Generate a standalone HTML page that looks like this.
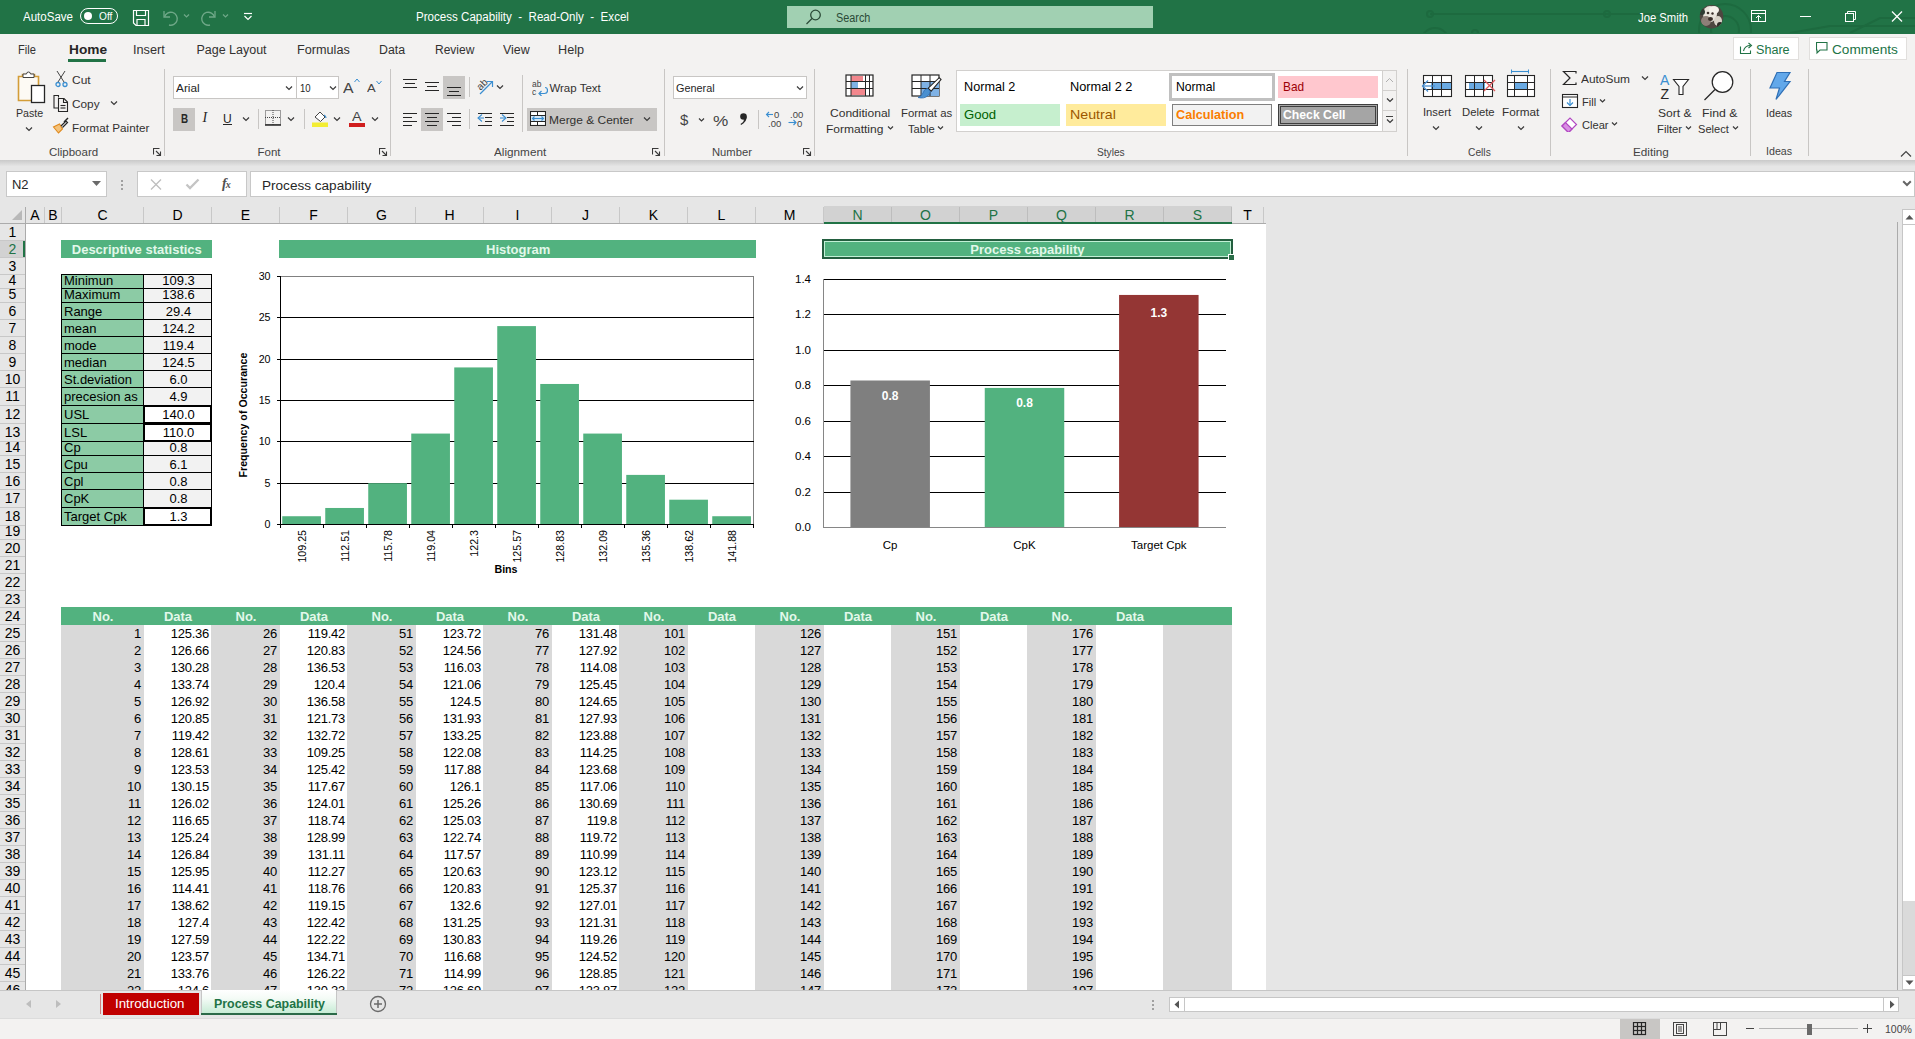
<!DOCTYPE html><html><head><meta charset="utf-8"><style>
*{margin:0;padding:0}
html,body{width:1915px;height:1039px;overflow:hidden;background:#fff}
body{position:relative;font-family:"Liberation Sans",sans-serif}
body>div,body>svg{position:absolute}
.t{position:absolute;white-space:nowrap;line-height:1}
</style></head><body>
<div style="left:0px;top:0px;width:1915px;height:34px;background:#217346"></div>
<div style="left:0px;top:34px;width:1915px;height:126px;background:#f3f2f1"></div>
<div style="left:0px;top:160px;width:1915px;height:6px;background:linear-gradient(#c9c9c9,#e4e4e4)"></div>
<div style="left:0px;top:166px;width:1915px;height:39px;background:#e6e6e6"></div>
<div style="left:0px;top:205px;width:1266px;height:18px;background:#e6e6e6"></div>
<div style="left:1266px;top:205px;width:649px;height:785px;background:#e6e6e6"></div>
<div style="left:26px;top:224px;width:1240px;height:766px;background:#fff"></div>
<div style="left:0px;top:224px;width:25px;height:766px;background:#e6e6e6"></div>
<div style="left:44px;top:207px;width:1px;height:16px;background:#c8c8c8"></div>
<div class="t" style="top:208.15px;font-size:14px;color:#000;left:35.0px;transform:translateX(-50%) ;">A</div>
<div style="left:61px;top:207px;width:1px;height:16px;background:#c8c8c8"></div>
<div class="t" style="top:208.15px;font-size:14px;color:#000;left:53.0px;transform:translateX(-50%) ;">B</div>
<div style="left:143px;top:207px;width:1px;height:16px;background:#c8c8c8"></div>
<div class="t" style="top:208.15px;font-size:14px;color:#000;left:102.5px;transform:translateX(-50%) ;">C</div>
<div style="left:211px;top:207px;width:1px;height:16px;background:#c8c8c8"></div>
<div class="t" style="top:208.15px;font-size:14px;color:#000;left:177.5px;transform:translateX(-50%) ;">D</div>
<div style="left:279px;top:207px;width:1px;height:16px;background:#c8c8c8"></div>
<div class="t" style="top:208.15px;font-size:14px;color:#000;left:245.5px;transform:translateX(-50%) ;">E</div>
<div style="left:347px;top:207px;width:1px;height:16px;background:#c8c8c8"></div>
<div class="t" style="top:208.15px;font-size:14px;color:#000;left:313.5px;transform:translateX(-50%) ;">F</div>
<div style="left:415px;top:207px;width:1px;height:16px;background:#c8c8c8"></div>
<div class="t" style="top:208.15px;font-size:14px;color:#000;left:381.5px;transform:translateX(-50%) ;">G</div>
<div style="left:483px;top:207px;width:1px;height:16px;background:#c8c8c8"></div>
<div class="t" style="top:208.15px;font-size:14px;color:#000;left:449.5px;transform:translateX(-50%) ;">H</div>
<div style="left:551px;top:207px;width:1px;height:16px;background:#c8c8c8"></div>
<div class="t" style="top:208.15px;font-size:14px;color:#000;left:517.5px;transform:translateX(-50%) ;">I</div>
<div style="left:619px;top:207px;width:1px;height:16px;background:#c8c8c8"></div>
<div class="t" style="top:208.15px;font-size:14px;color:#000;left:585.5px;transform:translateX(-50%) ;">J</div>
<div style="left:687px;top:207px;width:1px;height:16px;background:#c8c8c8"></div>
<div class="t" style="top:208.15px;font-size:14px;color:#000;left:653.5px;transform:translateX(-50%) ;">K</div>
<div style="left:755px;top:207px;width:1px;height:16px;background:#c8c8c8"></div>
<div class="t" style="top:208.15px;font-size:14px;color:#000;left:721.5px;transform:translateX(-50%) ;">L</div>
<div style="left:823px;top:207px;width:1px;height:16px;background:#c8c8c8"></div>
<div class="t" style="top:208.15px;font-size:14px;color:#000;left:789.5px;transform:translateX(-50%) ;">M</div>
<div style="left:824px;top:206px;width:68px;height:17px;background:#d2d2d2"></div>
<div style="left:891px;top:207px;width:1px;height:16px;background:#bdbdbd"></div>
<div class="t" style="top:208.15px;font-size:14px;color:#217346;left:857.5px;transform:translateX(-50%) ;">N</div>
<div style="left:892px;top:206px;width:68px;height:17px;background:#d2d2d2"></div>
<div style="left:959px;top:207px;width:1px;height:16px;background:#bdbdbd"></div>
<div class="t" style="top:208.15px;font-size:14px;color:#217346;left:925.5px;transform:translateX(-50%) ;">O</div>
<div style="left:960px;top:206px;width:68px;height:17px;background:#d2d2d2"></div>
<div style="left:1027px;top:207px;width:1px;height:16px;background:#bdbdbd"></div>
<div class="t" style="top:208.15px;font-size:14px;color:#217346;left:993.5px;transform:translateX(-50%) ;">P</div>
<div style="left:1028px;top:206px;width:68px;height:17px;background:#d2d2d2"></div>
<div style="left:1095px;top:207px;width:1px;height:16px;background:#bdbdbd"></div>
<div class="t" style="top:208.15px;font-size:14px;color:#217346;left:1061.5px;transform:translateX(-50%) ;">Q</div>
<div style="left:1096px;top:206px;width:68px;height:17px;background:#d2d2d2"></div>
<div style="left:1163px;top:207px;width:1px;height:16px;background:#bdbdbd"></div>
<div class="t" style="top:208.15px;font-size:14px;color:#217346;left:1129.5px;transform:translateX(-50%) ;">R</div>
<div style="left:1164px;top:206px;width:68px;height:17px;background:#d2d2d2"></div>
<div style="left:1231px;top:207px;width:1px;height:16px;background:#bdbdbd"></div>
<div class="t" style="top:208.15px;font-size:14px;color:#217346;left:1197.5px;transform:translateX(-50%) ;">S</div>
<div style="left:1263px;top:207px;width:1px;height:16px;background:#c8c8c8"></div>
<div class="t" style="top:208.15px;font-size:14px;color:#000;left:1247.5px;transform:translateX(-50%) ;">T</div>
<div style="left:0px;top:223px;width:1266px;height:1px;background:#ababab"></div>
<div style="left:824px;top:222px;width:408px;height:2px;background:#217346"></div>
<svg style="left:10px;top:209px" width="14" height="12"><polygon points="12,1 12,11 2,11" fill="#b8b8b8"/></svg>
<div style="left:25px;top:207px;width:1px;height:783px;background:#ababab"></div>
<div style="left:0px;top:240px;width:25px;height:1px;background:#c8c8c8"></div>
<div class="t" style="top:225.15px;font-size:14px;color:#000;left:12.5px;transform:translateX(-50%) ;">1</div>
<div style="left:0px;top:241px;width:25px;height:17px;background:#d2d2d2"></div>
<div style="left:23px;top:241px;width:2px;height:17px;background:#217346"></div>
<div style="left:0px;top:257px;width:25px;height:1px;background:#c8c8c8"></div>
<div class="t" style="top:242.15px;font-size:14px;color:#217346;left:12.5px;transform:translateX(-50%) ;">2</div>
<div style="left:0px;top:274px;width:25px;height:1px;background:#c8c8c8"></div>
<div class="t" style="top:259.15px;font-size:14px;color:#000;left:12.5px;transform:translateX(-50%) ;">3</div>
<div style="left:0px;top:288px;width:25px;height:1px;background:#c8c8c8"></div>
<div class="t" style="top:273.15px;font-size:14px;color:#000;left:12.5px;transform:translateX(-50%) ;">4</div>
<div style="left:0px;top:302px;width:25px;height:1px;background:#c8c8c8"></div>
<div class="t" style="top:287.15px;font-size:14px;color:#000;left:12.5px;transform:translateX(-50%) ;">5</div>
<div style="left:0px;top:319px;width:25px;height:1px;background:#c8c8c8"></div>
<div class="t" style="top:304.15px;font-size:14px;color:#000;left:12.5px;transform:translateX(-50%) ;">6</div>
<div style="left:0px;top:336px;width:25px;height:1px;background:#c8c8c8"></div>
<div class="t" style="top:321.15px;font-size:14px;color:#000;left:12.5px;transform:translateX(-50%) ;">7</div>
<div style="left:0px;top:353px;width:25px;height:1px;background:#c8c8c8"></div>
<div class="t" style="top:338.15px;font-size:14px;color:#000;left:12.5px;transform:translateX(-50%) ;">8</div>
<div style="left:0px;top:370px;width:25px;height:1px;background:#c8c8c8"></div>
<div class="t" style="top:355.15px;font-size:14px;color:#000;left:12.5px;transform:translateX(-50%) ;">9</div>
<div style="left:0px;top:387px;width:25px;height:1px;background:#c8c8c8"></div>
<div class="t" style="top:372.15px;font-size:14px;color:#000;left:12.5px;transform:translateX(-50%) ;">10</div>
<div style="left:0px;top:405px;width:25px;height:1px;background:#c8c8c8"></div>
<div class="t" style="top:389.15px;font-size:14px;color:#000;left:12.5px;transform:translateX(-50%) ;">11</div>
<div style="left:0px;top:423px;width:25px;height:1px;background:#c8c8c8"></div>
<div class="t" style="top:407.15px;font-size:14px;color:#000;left:12.5px;transform:translateX(-50%) ;">12</div>
<div style="left:0px;top:441px;width:25px;height:1px;background:#c8c8c8"></div>
<div class="t" style="top:425.15px;font-size:14px;color:#000;left:12.5px;transform:translateX(-50%) ;">13</div>
<div style="left:0px;top:455px;width:25px;height:1px;background:#c8c8c8"></div>
<div class="t" style="top:440.15px;font-size:14px;color:#000;left:12.5px;transform:translateX(-50%) ;">14</div>
<div style="left:0px;top:472px;width:25px;height:1px;background:#c8c8c8"></div>
<div class="t" style="top:457.15px;font-size:14px;color:#000;left:12.5px;transform:translateX(-50%) ;">15</div>
<div style="left:0px;top:489px;width:25px;height:1px;background:#c8c8c8"></div>
<div class="t" style="top:474.15px;font-size:14px;color:#000;left:12.5px;transform:translateX(-50%) ;">16</div>
<div style="left:0px;top:507px;width:25px;height:1px;background:#c8c8c8"></div>
<div class="t" style="top:491.15px;font-size:14px;color:#000;left:12.5px;transform:translateX(-50%) ;">17</div>
<div style="left:0px;top:525px;width:25px;height:1px;background:#c8c8c8"></div>
<div class="t" style="top:509.15px;font-size:14px;color:#000;left:12.5px;transform:translateX(-50%) ;">18</div>
<div style="left:0px;top:539px;width:25px;height:1px;background:#c8c8c8"></div>
<div class="t" style="top:524.15px;font-size:14px;color:#000;left:12.5px;transform:translateX(-50%) ;">19</div>
<div style="left:0px;top:556px;width:25px;height:1px;background:#c8c8c8"></div>
<div class="t" style="top:541.15px;font-size:14px;color:#000;left:12.5px;transform:translateX(-50%) ;">20</div>
<div style="left:0px;top:573px;width:25px;height:1px;background:#c8c8c8"></div>
<div class="t" style="top:558.15px;font-size:14px;color:#000;left:12.5px;transform:translateX(-50%) ;">21</div>
<div style="left:0px;top:590px;width:25px;height:1px;background:#c8c8c8"></div>
<div class="t" style="top:575.15px;font-size:14px;color:#000;left:12.5px;transform:translateX(-50%) ;">22</div>
<div style="left:0px;top:607px;width:25px;height:1px;background:#c8c8c8"></div>
<div class="t" style="top:592.15px;font-size:14px;color:#000;left:12.5px;transform:translateX(-50%) ;">23</div>
<div style="left:0px;top:624px;width:25px;height:1px;background:#c8c8c8"></div>
<div class="t" style="top:609.15px;font-size:14px;color:#000;left:12.5px;transform:translateX(-50%) ;">24</div>
<div style="left:0px;top:641px;width:25px;height:1px;background:#c8c8c8"></div>
<div class="t" style="top:626.15px;font-size:14px;color:#000;left:12.5px;transform:translateX(-50%) ;">25</div>
<div style="left:0px;top:658px;width:25px;height:1px;background:#c8c8c8"></div>
<div class="t" style="top:643.15px;font-size:14px;color:#000;left:12.5px;transform:translateX(-50%) ;">26</div>
<div style="left:0px;top:675px;width:25px;height:1px;background:#c8c8c8"></div>
<div class="t" style="top:660.15px;font-size:14px;color:#000;left:12.5px;transform:translateX(-50%) ;">27</div>
<div style="left:0px;top:692px;width:25px;height:1px;background:#c8c8c8"></div>
<div class="t" style="top:677.15px;font-size:14px;color:#000;left:12.5px;transform:translateX(-50%) ;">28</div>
<div style="left:0px;top:709px;width:25px;height:1px;background:#c8c8c8"></div>
<div class="t" style="top:694.15px;font-size:14px;color:#000;left:12.5px;transform:translateX(-50%) ;">29</div>
<div style="left:0px;top:726px;width:25px;height:1px;background:#c8c8c8"></div>
<div class="t" style="top:711.15px;font-size:14px;color:#000;left:12.5px;transform:translateX(-50%) ;">30</div>
<div style="left:0px;top:743px;width:25px;height:1px;background:#c8c8c8"></div>
<div class="t" style="top:728.15px;font-size:14px;color:#000;left:12.5px;transform:translateX(-50%) ;">31</div>
<div style="left:0px;top:760px;width:25px;height:1px;background:#c8c8c8"></div>
<div class="t" style="top:745.15px;font-size:14px;color:#000;left:12.5px;transform:translateX(-50%) ;">32</div>
<div style="left:0px;top:777px;width:25px;height:1px;background:#c8c8c8"></div>
<div class="t" style="top:762.15px;font-size:14px;color:#000;left:12.5px;transform:translateX(-50%) ;">33</div>
<div style="left:0px;top:794px;width:25px;height:1px;background:#c8c8c8"></div>
<div class="t" style="top:779.15px;font-size:14px;color:#000;left:12.5px;transform:translateX(-50%) ;">34</div>
<div style="left:0px;top:811px;width:25px;height:1px;background:#c8c8c8"></div>
<div class="t" style="top:796.15px;font-size:14px;color:#000;left:12.5px;transform:translateX(-50%) ;">35</div>
<div style="left:0px;top:828px;width:25px;height:1px;background:#c8c8c8"></div>
<div class="t" style="top:813.15px;font-size:14px;color:#000;left:12.5px;transform:translateX(-50%) ;">36</div>
<div style="left:0px;top:845px;width:25px;height:1px;background:#c8c8c8"></div>
<div class="t" style="top:830.15px;font-size:14px;color:#000;left:12.5px;transform:translateX(-50%) ;">37</div>
<div style="left:0px;top:862px;width:25px;height:1px;background:#c8c8c8"></div>
<div class="t" style="top:847.15px;font-size:14px;color:#000;left:12.5px;transform:translateX(-50%) ;">38</div>
<div style="left:0px;top:879px;width:25px;height:1px;background:#c8c8c8"></div>
<div class="t" style="top:864.15px;font-size:14px;color:#000;left:12.5px;transform:translateX(-50%) ;">39</div>
<div style="left:0px;top:896px;width:25px;height:1px;background:#c8c8c8"></div>
<div class="t" style="top:881.15px;font-size:14px;color:#000;left:12.5px;transform:translateX(-50%) ;">40</div>
<div style="left:0px;top:913px;width:25px;height:1px;background:#c8c8c8"></div>
<div class="t" style="top:898.15px;font-size:14px;color:#000;left:12.5px;transform:translateX(-50%) ;">41</div>
<div style="left:0px;top:930px;width:25px;height:1px;background:#c8c8c8"></div>
<div class="t" style="top:915.15px;font-size:14px;color:#000;left:12.5px;transform:translateX(-50%) ;">42</div>
<div style="left:0px;top:947px;width:25px;height:1px;background:#c8c8c8"></div>
<div class="t" style="top:932.15px;font-size:14px;color:#000;left:12.5px;transform:translateX(-50%) ;">43</div>
<div style="left:0px;top:964px;width:25px;height:1px;background:#c8c8c8"></div>
<div class="t" style="top:949.15px;font-size:14px;color:#000;left:12.5px;transform:translateX(-50%) ;">44</div>
<div style="left:0px;top:981px;width:25px;height:1px;background:#c8c8c8"></div>
<div class="t" style="top:966.15px;font-size:14px;color:#000;left:12.5px;transform:translateX(-50%) ;">45</div>
<div style="left:0px;top:998px;width:25px;height:1px;background:#c8c8c8"></div>
<div class="t" style="top:983.15px;font-size:14px;color:#000;left:12.5px;transform:translateX(-50%) ;">46</div>
<div style="left:61px;top:240px;width:151px;height:18px;background:#52b27f"></div>
<div class="t" style="top:242.70px;font-size:13px;color:#e2f8ea;font-weight:700;left:136.8px;transform:translateX(-50%) ;">Descriptive statistics</div>
<div style="left:279px;top:240px;width:477px;height:18px;background:#52b27f"></div>
<div class="t" style="top:242.70px;font-size:13px;color:#e2f8ea;font-weight:700;left:518.2px;transform:translateX(-50%) ;">Histogram</div>
<div style="left:823px;top:240px;width:409px;height:18px;background:#52b27f"></div>
<div class="t" style="top:242.70px;font-size:13px;color:#e2f8ea;font-weight:700;left:1027.4px;transform:translateX(-50%) ;">Process capability</div>
<div style="left:822px;top:239px;width:411px;height:20px;border:2px solid #235e3f;box-sizing:border-box"></div>
<div style="left:824px;top:241px;width:407px;height:16px;border:1px solid #c2f0d6;box-sizing:border-box"></div>
<div style="left:1228px;top:254px;width:5px;height:5px;background:#2a6e48;border:1px solid #fff"></div>
<div style="left:61px;top:274px;width:83px;height:15px;background:#8ccba5;border:1px solid #000;box-sizing:border-box"></div>
<div style="left:143px;top:274px;width:69px;height:15px;background:#f2f2f2;border:1px solid #000;box-sizing:border-box"></div>
<div class="t" style="top:274.00px;font-size:13px;color:#000;left:64px;">Minimun</div>
<div class="t" style="top:274.00px;font-size:13px;color:#000;left:178.5px;transform:translateX(-50%) ;">109.3</div>
<div style="left:61px;top:288px;width:83px;height:15px;background:#8ccba5;border:1px solid #000;box-sizing:border-box"></div>
<div style="left:143px;top:288px;width:69px;height:15px;background:#f2f2f2;border:1px solid #000;box-sizing:border-box"></div>
<div class="t" style="top:288.00px;font-size:13px;color:#000;left:64px;">Maximum</div>
<div class="t" style="top:288.00px;font-size:13px;color:#000;left:178.5px;transform:translateX(-50%) ;">138.6</div>
<div style="left:61px;top:302px;width:83px;height:18px;background:#8ccba5;border:1px solid #000;box-sizing:border-box"></div>
<div style="left:143px;top:302px;width:69px;height:18px;background:#f2f2f2;border:1px solid #000;box-sizing:border-box"></div>
<div class="t" style="top:305.00px;font-size:13px;color:#000;left:64px;">Range</div>
<div class="t" style="top:305.00px;font-size:13px;color:#000;left:178.5px;transform:translateX(-50%) ;">29.4</div>
<div style="left:61px;top:319px;width:83px;height:18px;background:#8ccba5;border:1px solid #000;box-sizing:border-box"></div>
<div style="left:143px;top:319px;width:69px;height:18px;background:#f2f2f2;border:1px solid #000;box-sizing:border-box"></div>
<div class="t" style="top:322.00px;font-size:13px;color:#000;left:64px;">mean</div>
<div class="t" style="top:322.00px;font-size:13px;color:#000;left:178.5px;transform:translateX(-50%) ;">124.2</div>
<div style="left:61px;top:336px;width:83px;height:18px;background:#8ccba5;border:1px solid #000;box-sizing:border-box"></div>
<div style="left:143px;top:336px;width:69px;height:18px;background:#f2f2f2;border:1px solid #000;box-sizing:border-box"></div>
<div class="t" style="top:339.00px;font-size:13px;color:#000;left:64px;">mode</div>
<div class="t" style="top:339.00px;font-size:13px;color:#000;left:178.5px;transform:translateX(-50%) ;">119.4</div>
<div style="left:61px;top:353px;width:83px;height:18px;background:#8ccba5;border:1px solid #000;box-sizing:border-box"></div>
<div style="left:143px;top:353px;width:69px;height:18px;background:#f2f2f2;border:1px solid #000;box-sizing:border-box"></div>
<div class="t" style="top:356.00px;font-size:13px;color:#000;left:64px;">median</div>
<div class="t" style="top:356.00px;font-size:13px;color:#000;left:178.5px;transform:translateX(-50%) ;">124.5</div>
<div style="left:61px;top:370px;width:83px;height:18px;background:#8ccba5;border:1px solid #000;box-sizing:border-box"></div>
<div style="left:143px;top:370px;width:69px;height:18px;background:#f2f2f2;border:1px solid #000;box-sizing:border-box"></div>
<div class="t" style="top:373.00px;font-size:13px;color:#000;left:64px;">St.deviation</div>
<div class="t" style="top:373.00px;font-size:13px;color:#000;left:178.5px;transform:translateX(-50%) ;">6.0</div>
<div style="left:61px;top:387px;width:83px;height:19px;background:#8ccba5;border:1px solid #000;box-sizing:border-box"></div>
<div style="left:143px;top:387px;width:69px;height:19px;background:#f2f2f2;border:1px solid #000;box-sizing:border-box"></div>
<div class="t" style="top:390.00px;font-size:13px;color:#000;left:64px;">precesion as</div>
<div class="t" style="top:390.00px;font-size:13px;color:#000;left:178.5px;transform:translateX(-50%) ;">4.9</div>
<div style="left:61px;top:405px;width:83px;height:19px;background:#8ccba5;border:1px solid #000;box-sizing:border-box"></div>
<div style="left:143px;top:405px;width:69px;height:19px;background:#fff;border:1px solid #000;box-sizing:border-box"></div>
<div style="left:143px;top:405px;width:69px;height:19px;border:2px solid #000;box-sizing:border-box"></div>
<div class="t" style="top:408.00px;font-size:13px;color:#000;left:64px;">USL</div>
<div class="t" style="top:408.00px;font-size:13px;color:#000;left:178.5px;transform:translateX(-50%) ;">140.0</div>
<div style="left:61px;top:423px;width:83px;height:19px;background:#8ccba5;border:1px solid #000;box-sizing:border-box"></div>
<div style="left:143px;top:423px;width:69px;height:19px;background:#fff;border:1px solid #000;box-sizing:border-box"></div>
<div style="left:143px;top:423px;width:69px;height:19px;border:2px solid #000;box-sizing:border-box"></div>
<div class="t" style="top:426.00px;font-size:13px;color:#000;left:64px;">LSL</div>
<div class="t" style="top:426.00px;font-size:13px;color:#000;left:178.5px;transform:translateX(-50%) ;">110.0</div>
<div style="left:61px;top:441px;width:83px;height:15px;background:#8ccba5;border:1px solid #000;box-sizing:border-box"></div>
<div style="left:143px;top:441px;width:69px;height:15px;background:#f2f2f2;border:1px solid #000;box-sizing:border-box"></div>
<div class="t" style="top:441.00px;font-size:13px;color:#000;left:64px;">Cp</div>
<div class="t" style="top:441.00px;font-size:13px;color:#000;left:178.5px;transform:translateX(-50%) ;">0.8</div>
<div style="left:61px;top:455px;width:83px;height:18px;background:#8ccba5;border:1px solid #000;box-sizing:border-box"></div>
<div style="left:143px;top:455px;width:69px;height:18px;background:#f2f2f2;border:1px solid #000;box-sizing:border-box"></div>
<div class="t" style="top:458.00px;font-size:13px;color:#000;left:64px;">Cpu</div>
<div class="t" style="top:458.00px;font-size:13px;color:#000;left:178.5px;transform:translateX(-50%) ;">6.1</div>
<div style="left:61px;top:472px;width:83px;height:18px;background:#8ccba5;border:1px solid #000;box-sizing:border-box"></div>
<div style="left:143px;top:472px;width:69px;height:18px;background:#f2f2f2;border:1px solid #000;box-sizing:border-box"></div>
<div class="t" style="top:475.00px;font-size:13px;color:#000;left:64px;">Cpl</div>
<div class="t" style="top:475.00px;font-size:13px;color:#000;left:178.5px;transform:translateX(-50%) ;">0.8</div>
<div style="left:61px;top:489px;width:83px;height:19px;background:#8ccba5;border:1px solid #000;box-sizing:border-box"></div>
<div style="left:143px;top:489px;width:69px;height:19px;background:#f2f2f2;border:1px solid #000;box-sizing:border-box"></div>
<div class="t" style="top:492.00px;font-size:13px;color:#000;left:64px;">CpK</div>
<div class="t" style="top:492.00px;font-size:13px;color:#000;left:178.5px;transform:translateX(-50%) ;">0.8</div>
<div style="left:61px;top:507px;width:83px;height:19px;background:#8ccba5;border:1px solid #000;box-sizing:border-box"></div>
<div style="left:143px;top:507px;width:69px;height:19px;background:#fff;border:1px solid #000;box-sizing:border-box"></div>
<div style="left:143px;top:507px;width:69px;height:19px;border:2px solid #000;box-sizing:border-box"></div>
<div class="t" style="top:510.00px;font-size:13px;color:#000;left:64px;">Target Cpk</div>
<div class="t" style="top:510.00px;font-size:13px;color:#000;left:178.5px;transform:translateX(-50%) ;">1.3</div>
<div style="left:61px;top:607px;width:1171px;height:18px;background:#52b27f"></div>
<div class="t" style="top:610.00px;font-size:13px;color:#e2f8ea;font-weight:700;left:103.0px;transform:translateX(-50%) ;">No.</div>
<div class="t" style="top:610.00px;font-size:13px;color:#e2f8ea;font-weight:700;left:178.0px;transform:translateX(-50%) ;">Data</div>
<div class="t" style="top:610.00px;font-size:13px;color:#e2f8ea;font-weight:700;left:246.0px;transform:translateX(-50%) ;">No.</div>
<div class="t" style="top:610.00px;font-size:13px;color:#e2f8ea;font-weight:700;left:314.0px;transform:translateX(-50%) ;">Data</div>
<div class="t" style="top:610.00px;font-size:13px;color:#e2f8ea;font-weight:700;left:382.0px;transform:translateX(-50%) ;">No.</div>
<div class="t" style="top:610.00px;font-size:13px;color:#e2f8ea;font-weight:700;left:450.0px;transform:translateX(-50%) ;">Data</div>
<div class="t" style="top:610.00px;font-size:13px;color:#e2f8ea;font-weight:700;left:518.0px;transform:translateX(-50%) ;">No.</div>
<div class="t" style="top:610.00px;font-size:13px;color:#e2f8ea;font-weight:700;left:586.0px;transform:translateX(-50%) ;">Data</div>
<div class="t" style="top:610.00px;font-size:13px;color:#e2f8ea;font-weight:700;left:654.0px;transform:translateX(-50%) ;">No.</div>
<div class="t" style="top:610.00px;font-size:13px;color:#e2f8ea;font-weight:700;left:722.0px;transform:translateX(-50%) ;">Data</div>
<div class="t" style="top:610.00px;font-size:13px;color:#e2f8ea;font-weight:700;left:790.0px;transform:translateX(-50%) ;">No.</div>
<div class="t" style="top:610.00px;font-size:13px;color:#e2f8ea;font-weight:700;left:858.0px;transform:translateX(-50%) ;">Data</div>
<div class="t" style="top:610.00px;font-size:13px;color:#e2f8ea;font-weight:700;left:926.0px;transform:translateX(-50%) ;">No.</div>
<div class="t" style="top:610.00px;font-size:13px;color:#e2f8ea;font-weight:700;left:994.0px;transform:translateX(-50%) ;">Data</div>
<div class="t" style="top:610.00px;font-size:13px;color:#e2f8ea;font-weight:700;left:1062.0px;transform:translateX(-50%) ;">No.</div>
<div class="t" style="top:610.00px;font-size:13px;color:#e2f8ea;font-weight:700;left:1130.0px;transform:translateX(-50%) ;">Data</div>
<div style="left:61px;top:625px;width:83px;height:365px;background:#d9d9d9"></div>
<div style="left:211px;top:625px;width:69px;height:365px;background:#d9d9d9"></div>
<div style="left:347px;top:625px;width:69px;height:365px;background:#d9d9d9"></div>
<div style="left:483px;top:625px;width:69px;height:365px;background:#d9d9d9"></div>
<div style="left:619px;top:625px;width:69px;height:365px;background:#d9d9d9"></div>
<div style="left:755px;top:625px;width:69px;height:365px;background:#d9d9d9"></div>
<div style="left:891px;top:625px;width:69px;height:365px;background:#d9d9d9"></div>
<div style="left:1027px;top:625px;width:69px;height:365px;background:#d9d9d9"></div>
<div style="left:1163px;top:625px;width:69px;height:365px;background:#d9d9d9"></div>
<div class="t" style="top:627.00px;font-size:13px;color:#000;right:1774px;letter-spacing:-0.25px">1</div>
<div class="t" style="top:627.00px;font-size:13px;color:#000;right:1638px;letter-spacing:-0.25px">26</div>
<div class="t" style="top:627.00px;font-size:13px;color:#000;right:1502px;letter-spacing:-0.25px">51</div>
<div class="t" style="top:627.00px;font-size:13px;color:#000;right:1366px;letter-spacing:-0.25px">76</div>
<div class="t" style="top:627.00px;font-size:13px;color:#000;right:1230px;letter-spacing:-0.25px">101</div>
<div class="t" style="top:627.00px;font-size:13px;color:#000;right:1094px;letter-spacing:-0.25px">126</div>
<div class="t" style="top:627.00px;font-size:13px;color:#000;right:958px;letter-spacing:-0.25px">151</div>
<div class="t" style="top:627.00px;font-size:13px;color:#000;right:822px;letter-spacing:-0.25px">176</div>
<div class="t" style="top:627.00px;font-size:13px;color:#000;right:1706px;letter-spacing:-0.25px">125.36</div>
<div class="t" style="top:627.00px;font-size:13px;color:#000;right:1570px;letter-spacing:-0.25px">119.42</div>
<div class="t" style="top:627.00px;font-size:13px;color:#000;right:1434px;letter-spacing:-0.25px">123.72</div>
<div class="t" style="top:627.00px;font-size:13px;color:#000;right:1298px;letter-spacing:-0.25px">131.48</div>
<div class="t" style="top:644.00px;font-size:13px;color:#000;right:1774px;letter-spacing:-0.25px">2</div>
<div class="t" style="top:644.00px;font-size:13px;color:#000;right:1638px;letter-spacing:-0.25px">27</div>
<div class="t" style="top:644.00px;font-size:13px;color:#000;right:1502px;letter-spacing:-0.25px">52</div>
<div class="t" style="top:644.00px;font-size:13px;color:#000;right:1366px;letter-spacing:-0.25px">77</div>
<div class="t" style="top:644.00px;font-size:13px;color:#000;right:1230px;letter-spacing:-0.25px">102</div>
<div class="t" style="top:644.00px;font-size:13px;color:#000;right:1094px;letter-spacing:-0.25px">127</div>
<div class="t" style="top:644.00px;font-size:13px;color:#000;right:958px;letter-spacing:-0.25px">152</div>
<div class="t" style="top:644.00px;font-size:13px;color:#000;right:822px;letter-spacing:-0.25px">177</div>
<div class="t" style="top:644.00px;font-size:13px;color:#000;right:1706px;letter-spacing:-0.25px">126.66</div>
<div class="t" style="top:644.00px;font-size:13px;color:#000;right:1570px;letter-spacing:-0.25px">120.83</div>
<div class="t" style="top:644.00px;font-size:13px;color:#000;right:1434px;letter-spacing:-0.25px">124.56</div>
<div class="t" style="top:644.00px;font-size:13px;color:#000;right:1298px;letter-spacing:-0.25px">127.92</div>
<div class="t" style="top:661.00px;font-size:13px;color:#000;right:1774px;letter-spacing:-0.25px">3</div>
<div class="t" style="top:661.00px;font-size:13px;color:#000;right:1638px;letter-spacing:-0.25px">28</div>
<div class="t" style="top:661.00px;font-size:13px;color:#000;right:1502px;letter-spacing:-0.25px">53</div>
<div class="t" style="top:661.00px;font-size:13px;color:#000;right:1366px;letter-spacing:-0.25px">78</div>
<div class="t" style="top:661.00px;font-size:13px;color:#000;right:1230px;letter-spacing:-0.25px">103</div>
<div class="t" style="top:661.00px;font-size:13px;color:#000;right:1094px;letter-spacing:-0.25px">128</div>
<div class="t" style="top:661.00px;font-size:13px;color:#000;right:958px;letter-spacing:-0.25px">153</div>
<div class="t" style="top:661.00px;font-size:13px;color:#000;right:822px;letter-spacing:-0.25px">178</div>
<div class="t" style="top:661.00px;font-size:13px;color:#000;right:1706px;letter-spacing:-0.25px">130.28</div>
<div class="t" style="top:661.00px;font-size:13px;color:#000;right:1570px;letter-spacing:-0.25px">136.53</div>
<div class="t" style="top:661.00px;font-size:13px;color:#000;right:1434px;letter-spacing:-0.25px">116.03</div>
<div class="t" style="top:661.00px;font-size:13px;color:#000;right:1298px;letter-spacing:-0.25px">114.08</div>
<div class="t" style="top:678.00px;font-size:13px;color:#000;right:1774px;letter-spacing:-0.25px">4</div>
<div class="t" style="top:678.00px;font-size:13px;color:#000;right:1638px;letter-spacing:-0.25px">29</div>
<div class="t" style="top:678.00px;font-size:13px;color:#000;right:1502px;letter-spacing:-0.25px">54</div>
<div class="t" style="top:678.00px;font-size:13px;color:#000;right:1366px;letter-spacing:-0.25px">79</div>
<div class="t" style="top:678.00px;font-size:13px;color:#000;right:1230px;letter-spacing:-0.25px">104</div>
<div class="t" style="top:678.00px;font-size:13px;color:#000;right:1094px;letter-spacing:-0.25px">129</div>
<div class="t" style="top:678.00px;font-size:13px;color:#000;right:958px;letter-spacing:-0.25px">154</div>
<div class="t" style="top:678.00px;font-size:13px;color:#000;right:822px;letter-spacing:-0.25px">179</div>
<div class="t" style="top:678.00px;font-size:13px;color:#000;right:1706px;letter-spacing:-0.25px">133.74</div>
<div class="t" style="top:678.00px;font-size:13px;color:#000;right:1570px;letter-spacing:-0.25px">120.4</div>
<div class="t" style="top:678.00px;font-size:13px;color:#000;right:1434px;letter-spacing:-0.25px">121.06</div>
<div class="t" style="top:678.00px;font-size:13px;color:#000;right:1298px;letter-spacing:-0.25px">125.45</div>
<div class="t" style="top:695.00px;font-size:13px;color:#000;right:1774px;letter-spacing:-0.25px">5</div>
<div class="t" style="top:695.00px;font-size:13px;color:#000;right:1638px;letter-spacing:-0.25px">30</div>
<div class="t" style="top:695.00px;font-size:13px;color:#000;right:1502px;letter-spacing:-0.25px">55</div>
<div class="t" style="top:695.00px;font-size:13px;color:#000;right:1366px;letter-spacing:-0.25px">80</div>
<div class="t" style="top:695.00px;font-size:13px;color:#000;right:1230px;letter-spacing:-0.25px">105</div>
<div class="t" style="top:695.00px;font-size:13px;color:#000;right:1094px;letter-spacing:-0.25px">130</div>
<div class="t" style="top:695.00px;font-size:13px;color:#000;right:958px;letter-spacing:-0.25px">155</div>
<div class="t" style="top:695.00px;font-size:13px;color:#000;right:822px;letter-spacing:-0.25px">180</div>
<div class="t" style="top:695.00px;font-size:13px;color:#000;right:1706px;letter-spacing:-0.25px">126.92</div>
<div class="t" style="top:695.00px;font-size:13px;color:#000;right:1570px;letter-spacing:-0.25px">136.58</div>
<div class="t" style="top:695.00px;font-size:13px;color:#000;right:1434px;letter-spacing:-0.25px">124.5</div>
<div class="t" style="top:695.00px;font-size:13px;color:#000;right:1298px;letter-spacing:-0.25px">124.65</div>
<div class="t" style="top:712.00px;font-size:13px;color:#000;right:1774px;letter-spacing:-0.25px">6</div>
<div class="t" style="top:712.00px;font-size:13px;color:#000;right:1638px;letter-spacing:-0.25px">31</div>
<div class="t" style="top:712.00px;font-size:13px;color:#000;right:1502px;letter-spacing:-0.25px">56</div>
<div class="t" style="top:712.00px;font-size:13px;color:#000;right:1366px;letter-spacing:-0.25px">81</div>
<div class="t" style="top:712.00px;font-size:13px;color:#000;right:1230px;letter-spacing:-0.25px">106</div>
<div class="t" style="top:712.00px;font-size:13px;color:#000;right:1094px;letter-spacing:-0.25px">131</div>
<div class="t" style="top:712.00px;font-size:13px;color:#000;right:958px;letter-spacing:-0.25px">156</div>
<div class="t" style="top:712.00px;font-size:13px;color:#000;right:822px;letter-spacing:-0.25px">181</div>
<div class="t" style="top:712.00px;font-size:13px;color:#000;right:1706px;letter-spacing:-0.25px">120.85</div>
<div class="t" style="top:712.00px;font-size:13px;color:#000;right:1570px;letter-spacing:-0.25px">121.73</div>
<div class="t" style="top:712.00px;font-size:13px;color:#000;right:1434px;letter-spacing:-0.25px">131.93</div>
<div class="t" style="top:712.00px;font-size:13px;color:#000;right:1298px;letter-spacing:-0.25px">127.93</div>
<div class="t" style="top:729.00px;font-size:13px;color:#000;right:1774px;letter-spacing:-0.25px">7</div>
<div class="t" style="top:729.00px;font-size:13px;color:#000;right:1638px;letter-spacing:-0.25px">32</div>
<div class="t" style="top:729.00px;font-size:13px;color:#000;right:1502px;letter-spacing:-0.25px">57</div>
<div class="t" style="top:729.00px;font-size:13px;color:#000;right:1366px;letter-spacing:-0.25px">82</div>
<div class="t" style="top:729.00px;font-size:13px;color:#000;right:1230px;letter-spacing:-0.25px">107</div>
<div class="t" style="top:729.00px;font-size:13px;color:#000;right:1094px;letter-spacing:-0.25px">132</div>
<div class="t" style="top:729.00px;font-size:13px;color:#000;right:958px;letter-spacing:-0.25px">157</div>
<div class="t" style="top:729.00px;font-size:13px;color:#000;right:822px;letter-spacing:-0.25px">182</div>
<div class="t" style="top:729.00px;font-size:13px;color:#000;right:1706px;letter-spacing:-0.25px">119.42</div>
<div class="t" style="top:729.00px;font-size:13px;color:#000;right:1570px;letter-spacing:-0.25px">132.72</div>
<div class="t" style="top:729.00px;font-size:13px;color:#000;right:1434px;letter-spacing:-0.25px">133.25</div>
<div class="t" style="top:729.00px;font-size:13px;color:#000;right:1298px;letter-spacing:-0.25px">123.88</div>
<div class="t" style="top:746.00px;font-size:13px;color:#000;right:1774px;letter-spacing:-0.25px">8</div>
<div class="t" style="top:746.00px;font-size:13px;color:#000;right:1638px;letter-spacing:-0.25px">33</div>
<div class="t" style="top:746.00px;font-size:13px;color:#000;right:1502px;letter-spacing:-0.25px">58</div>
<div class="t" style="top:746.00px;font-size:13px;color:#000;right:1366px;letter-spacing:-0.25px">83</div>
<div class="t" style="top:746.00px;font-size:13px;color:#000;right:1230px;letter-spacing:-0.25px">108</div>
<div class="t" style="top:746.00px;font-size:13px;color:#000;right:1094px;letter-spacing:-0.25px">133</div>
<div class="t" style="top:746.00px;font-size:13px;color:#000;right:958px;letter-spacing:-0.25px">158</div>
<div class="t" style="top:746.00px;font-size:13px;color:#000;right:822px;letter-spacing:-0.25px">183</div>
<div class="t" style="top:746.00px;font-size:13px;color:#000;right:1706px;letter-spacing:-0.25px">128.61</div>
<div class="t" style="top:746.00px;font-size:13px;color:#000;right:1570px;letter-spacing:-0.25px">109.25</div>
<div class="t" style="top:746.00px;font-size:13px;color:#000;right:1434px;letter-spacing:-0.25px">122.08</div>
<div class="t" style="top:746.00px;font-size:13px;color:#000;right:1298px;letter-spacing:-0.25px">114.25</div>
<div class="t" style="top:763.00px;font-size:13px;color:#000;right:1774px;letter-spacing:-0.25px">9</div>
<div class="t" style="top:763.00px;font-size:13px;color:#000;right:1638px;letter-spacing:-0.25px">34</div>
<div class="t" style="top:763.00px;font-size:13px;color:#000;right:1502px;letter-spacing:-0.25px">59</div>
<div class="t" style="top:763.00px;font-size:13px;color:#000;right:1366px;letter-spacing:-0.25px">84</div>
<div class="t" style="top:763.00px;font-size:13px;color:#000;right:1230px;letter-spacing:-0.25px">109</div>
<div class="t" style="top:763.00px;font-size:13px;color:#000;right:1094px;letter-spacing:-0.25px">134</div>
<div class="t" style="top:763.00px;font-size:13px;color:#000;right:958px;letter-spacing:-0.25px">159</div>
<div class="t" style="top:763.00px;font-size:13px;color:#000;right:822px;letter-spacing:-0.25px">184</div>
<div class="t" style="top:763.00px;font-size:13px;color:#000;right:1706px;letter-spacing:-0.25px">123.53</div>
<div class="t" style="top:763.00px;font-size:13px;color:#000;right:1570px;letter-spacing:-0.25px">125.42</div>
<div class="t" style="top:763.00px;font-size:13px;color:#000;right:1434px;letter-spacing:-0.25px">117.88</div>
<div class="t" style="top:763.00px;font-size:13px;color:#000;right:1298px;letter-spacing:-0.25px">123.68</div>
<div class="t" style="top:780.00px;font-size:13px;color:#000;right:1774px;letter-spacing:-0.25px">10</div>
<div class="t" style="top:780.00px;font-size:13px;color:#000;right:1638px;letter-spacing:-0.25px">35</div>
<div class="t" style="top:780.00px;font-size:13px;color:#000;right:1502px;letter-spacing:-0.25px">60</div>
<div class="t" style="top:780.00px;font-size:13px;color:#000;right:1366px;letter-spacing:-0.25px">85</div>
<div class="t" style="top:780.00px;font-size:13px;color:#000;right:1230px;letter-spacing:-0.25px">110</div>
<div class="t" style="top:780.00px;font-size:13px;color:#000;right:1094px;letter-spacing:-0.25px">135</div>
<div class="t" style="top:780.00px;font-size:13px;color:#000;right:958px;letter-spacing:-0.25px">160</div>
<div class="t" style="top:780.00px;font-size:13px;color:#000;right:822px;letter-spacing:-0.25px">185</div>
<div class="t" style="top:780.00px;font-size:13px;color:#000;right:1706px;letter-spacing:-0.25px">130.15</div>
<div class="t" style="top:780.00px;font-size:13px;color:#000;right:1570px;letter-spacing:-0.25px">117.67</div>
<div class="t" style="top:780.00px;font-size:13px;color:#000;right:1434px;letter-spacing:-0.25px">126.1</div>
<div class="t" style="top:780.00px;font-size:13px;color:#000;right:1298px;letter-spacing:-0.25px">117.06</div>
<div class="t" style="top:797.00px;font-size:13px;color:#000;right:1774px;letter-spacing:-0.25px">11</div>
<div class="t" style="top:797.00px;font-size:13px;color:#000;right:1638px;letter-spacing:-0.25px">36</div>
<div class="t" style="top:797.00px;font-size:13px;color:#000;right:1502px;letter-spacing:-0.25px">61</div>
<div class="t" style="top:797.00px;font-size:13px;color:#000;right:1366px;letter-spacing:-0.25px">86</div>
<div class="t" style="top:797.00px;font-size:13px;color:#000;right:1230px;letter-spacing:-0.25px">111</div>
<div class="t" style="top:797.00px;font-size:13px;color:#000;right:1094px;letter-spacing:-0.25px">136</div>
<div class="t" style="top:797.00px;font-size:13px;color:#000;right:958px;letter-spacing:-0.25px">161</div>
<div class="t" style="top:797.00px;font-size:13px;color:#000;right:822px;letter-spacing:-0.25px">186</div>
<div class="t" style="top:797.00px;font-size:13px;color:#000;right:1706px;letter-spacing:-0.25px">126.02</div>
<div class="t" style="top:797.00px;font-size:13px;color:#000;right:1570px;letter-spacing:-0.25px">124.01</div>
<div class="t" style="top:797.00px;font-size:13px;color:#000;right:1434px;letter-spacing:-0.25px">125.26</div>
<div class="t" style="top:797.00px;font-size:13px;color:#000;right:1298px;letter-spacing:-0.25px">130.69</div>
<div class="t" style="top:814.00px;font-size:13px;color:#000;right:1774px;letter-spacing:-0.25px">12</div>
<div class="t" style="top:814.00px;font-size:13px;color:#000;right:1638px;letter-spacing:-0.25px">37</div>
<div class="t" style="top:814.00px;font-size:13px;color:#000;right:1502px;letter-spacing:-0.25px">62</div>
<div class="t" style="top:814.00px;font-size:13px;color:#000;right:1366px;letter-spacing:-0.25px">87</div>
<div class="t" style="top:814.00px;font-size:13px;color:#000;right:1230px;letter-spacing:-0.25px">112</div>
<div class="t" style="top:814.00px;font-size:13px;color:#000;right:1094px;letter-spacing:-0.25px">137</div>
<div class="t" style="top:814.00px;font-size:13px;color:#000;right:958px;letter-spacing:-0.25px">162</div>
<div class="t" style="top:814.00px;font-size:13px;color:#000;right:822px;letter-spacing:-0.25px">187</div>
<div class="t" style="top:814.00px;font-size:13px;color:#000;right:1706px;letter-spacing:-0.25px">116.65</div>
<div class="t" style="top:814.00px;font-size:13px;color:#000;right:1570px;letter-spacing:-0.25px">118.74</div>
<div class="t" style="top:814.00px;font-size:13px;color:#000;right:1434px;letter-spacing:-0.25px">125.03</div>
<div class="t" style="top:814.00px;font-size:13px;color:#000;right:1298px;letter-spacing:-0.25px">119.8</div>
<div class="t" style="top:831.00px;font-size:13px;color:#000;right:1774px;letter-spacing:-0.25px">13</div>
<div class="t" style="top:831.00px;font-size:13px;color:#000;right:1638px;letter-spacing:-0.25px">38</div>
<div class="t" style="top:831.00px;font-size:13px;color:#000;right:1502px;letter-spacing:-0.25px">63</div>
<div class="t" style="top:831.00px;font-size:13px;color:#000;right:1366px;letter-spacing:-0.25px">88</div>
<div class="t" style="top:831.00px;font-size:13px;color:#000;right:1230px;letter-spacing:-0.25px">113</div>
<div class="t" style="top:831.00px;font-size:13px;color:#000;right:1094px;letter-spacing:-0.25px">138</div>
<div class="t" style="top:831.00px;font-size:13px;color:#000;right:958px;letter-spacing:-0.25px">163</div>
<div class="t" style="top:831.00px;font-size:13px;color:#000;right:822px;letter-spacing:-0.25px">188</div>
<div class="t" style="top:831.00px;font-size:13px;color:#000;right:1706px;letter-spacing:-0.25px">125.24</div>
<div class="t" style="top:831.00px;font-size:13px;color:#000;right:1570px;letter-spacing:-0.25px">128.99</div>
<div class="t" style="top:831.00px;font-size:13px;color:#000;right:1434px;letter-spacing:-0.25px">122.74</div>
<div class="t" style="top:831.00px;font-size:13px;color:#000;right:1298px;letter-spacing:-0.25px">119.72</div>
<div class="t" style="top:848.00px;font-size:13px;color:#000;right:1774px;letter-spacing:-0.25px">14</div>
<div class="t" style="top:848.00px;font-size:13px;color:#000;right:1638px;letter-spacing:-0.25px">39</div>
<div class="t" style="top:848.00px;font-size:13px;color:#000;right:1502px;letter-spacing:-0.25px">64</div>
<div class="t" style="top:848.00px;font-size:13px;color:#000;right:1366px;letter-spacing:-0.25px">89</div>
<div class="t" style="top:848.00px;font-size:13px;color:#000;right:1230px;letter-spacing:-0.25px">114</div>
<div class="t" style="top:848.00px;font-size:13px;color:#000;right:1094px;letter-spacing:-0.25px">139</div>
<div class="t" style="top:848.00px;font-size:13px;color:#000;right:958px;letter-spacing:-0.25px">164</div>
<div class="t" style="top:848.00px;font-size:13px;color:#000;right:822px;letter-spacing:-0.25px">189</div>
<div class="t" style="top:848.00px;font-size:13px;color:#000;right:1706px;letter-spacing:-0.25px">126.84</div>
<div class="t" style="top:848.00px;font-size:13px;color:#000;right:1570px;letter-spacing:-0.25px">131.11</div>
<div class="t" style="top:848.00px;font-size:13px;color:#000;right:1434px;letter-spacing:-0.25px">117.57</div>
<div class="t" style="top:848.00px;font-size:13px;color:#000;right:1298px;letter-spacing:-0.25px">110.99</div>
<div class="t" style="top:865.00px;font-size:13px;color:#000;right:1774px;letter-spacing:-0.25px">15</div>
<div class="t" style="top:865.00px;font-size:13px;color:#000;right:1638px;letter-spacing:-0.25px">40</div>
<div class="t" style="top:865.00px;font-size:13px;color:#000;right:1502px;letter-spacing:-0.25px">65</div>
<div class="t" style="top:865.00px;font-size:13px;color:#000;right:1366px;letter-spacing:-0.25px">90</div>
<div class="t" style="top:865.00px;font-size:13px;color:#000;right:1230px;letter-spacing:-0.25px">115</div>
<div class="t" style="top:865.00px;font-size:13px;color:#000;right:1094px;letter-spacing:-0.25px">140</div>
<div class="t" style="top:865.00px;font-size:13px;color:#000;right:958px;letter-spacing:-0.25px">165</div>
<div class="t" style="top:865.00px;font-size:13px;color:#000;right:822px;letter-spacing:-0.25px">190</div>
<div class="t" style="top:865.00px;font-size:13px;color:#000;right:1706px;letter-spacing:-0.25px">125.95</div>
<div class="t" style="top:865.00px;font-size:13px;color:#000;right:1570px;letter-spacing:-0.25px">112.27</div>
<div class="t" style="top:865.00px;font-size:13px;color:#000;right:1434px;letter-spacing:-0.25px">120.63</div>
<div class="t" style="top:865.00px;font-size:13px;color:#000;right:1298px;letter-spacing:-0.25px">123.12</div>
<div class="t" style="top:882.00px;font-size:13px;color:#000;right:1774px;letter-spacing:-0.25px">16</div>
<div class="t" style="top:882.00px;font-size:13px;color:#000;right:1638px;letter-spacing:-0.25px">41</div>
<div class="t" style="top:882.00px;font-size:13px;color:#000;right:1502px;letter-spacing:-0.25px">66</div>
<div class="t" style="top:882.00px;font-size:13px;color:#000;right:1366px;letter-spacing:-0.25px">91</div>
<div class="t" style="top:882.00px;font-size:13px;color:#000;right:1230px;letter-spacing:-0.25px">116</div>
<div class="t" style="top:882.00px;font-size:13px;color:#000;right:1094px;letter-spacing:-0.25px">141</div>
<div class="t" style="top:882.00px;font-size:13px;color:#000;right:958px;letter-spacing:-0.25px">166</div>
<div class="t" style="top:882.00px;font-size:13px;color:#000;right:822px;letter-spacing:-0.25px">191</div>
<div class="t" style="top:882.00px;font-size:13px;color:#000;right:1706px;letter-spacing:-0.25px">114.41</div>
<div class="t" style="top:882.00px;font-size:13px;color:#000;right:1570px;letter-spacing:-0.25px">118.76</div>
<div class="t" style="top:882.00px;font-size:13px;color:#000;right:1434px;letter-spacing:-0.25px">120.83</div>
<div class="t" style="top:882.00px;font-size:13px;color:#000;right:1298px;letter-spacing:-0.25px">125.37</div>
<div class="t" style="top:899.00px;font-size:13px;color:#000;right:1774px;letter-spacing:-0.25px">17</div>
<div class="t" style="top:899.00px;font-size:13px;color:#000;right:1638px;letter-spacing:-0.25px">42</div>
<div class="t" style="top:899.00px;font-size:13px;color:#000;right:1502px;letter-spacing:-0.25px">67</div>
<div class="t" style="top:899.00px;font-size:13px;color:#000;right:1366px;letter-spacing:-0.25px">92</div>
<div class="t" style="top:899.00px;font-size:13px;color:#000;right:1230px;letter-spacing:-0.25px">117</div>
<div class="t" style="top:899.00px;font-size:13px;color:#000;right:1094px;letter-spacing:-0.25px">142</div>
<div class="t" style="top:899.00px;font-size:13px;color:#000;right:958px;letter-spacing:-0.25px">167</div>
<div class="t" style="top:899.00px;font-size:13px;color:#000;right:822px;letter-spacing:-0.25px">192</div>
<div class="t" style="top:899.00px;font-size:13px;color:#000;right:1706px;letter-spacing:-0.25px">138.62</div>
<div class="t" style="top:899.00px;font-size:13px;color:#000;right:1570px;letter-spacing:-0.25px">119.15</div>
<div class="t" style="top:899.00px;font-size:13px;color:#000;right:1434px;letter-spacing:-0.25px">132.6</div>
<div class="t" style="top:899.00px;font-size:13px;color:#000;right:1298px;letter-spacing:-0.25px">127.01</div>
<div class="t" style="top:916.00px;font-size:13px;color:#000;right:1774px;letter-spacing:-0.25px">18</div>
<div class="t" style="top:916.00px;font-size:13px;color:#000;right:1638px;letter-spacing:-0.25px">43</div>
<div class="t" style="top:916.00px;font-size:13px;color:#000;right:1502px;letter-spacing:-0.25px">68</div>
<div class="t" style="top:916.00px;font-size:13px;color:#000;right:1366px;letter-spacing:-0.25px">93</div>
<div class="t" style="top:916.00px;font-size:13px;color:#000;right:1230px;letter-spacing:-0.25px">118</div>
<div class="t" style="top:916.00px;font-size:13px;color:#000;right:1094px;letter-spacing:-0.25px">143</div>
<div class="t" style="top:916.00px;font-size:13px;color:#000;right:958px;letter-spacing:-0.25px">168</div>
<div class="t" style="top:916.00px;font-size:13px;color:#000;right:822px;letter-spacing:-0.25px">193</div>
<div class="t" style="top:916.00px;font-size:13px;color:#000;right:1706px;letter-spacing:-0.25px">127.4</div>
<div class="t" style="top:916.00px;font-size:13px;color:#000;right:1570px;letter-spacing:-0.25px">122.42</div>
<div class="t" style="top:916.00px;font-size:13px;color:#000;right:1434px;letter-spacing:-0.25px">131.25</div>
<div class="t" style="top:916.00px;font-size:13px;color:#000;right:1298px;letter-spacing:-0.25px">121.31</div>
<div class="t" style="top:933.00px;font-size:13px;color:#000;right:1774px;letter-spacing:-0.25px">19</div>
<div class="t" style="top:933.00px;font-size:13px;color:#000;right:1638px;letter-spacing:-0.25px">44</div>
<div class="t" style="top:933.00px;font-size:13px;color:#000;right:1502px;letter-spacing:-0.25px">69</div>
<div class="t" style="top:933.00px;font-size:13px;color:#000;right:1366px;letter-spacing:-0.25px">94</div>
<div class="t" style="top:933.00px;font-size:13px;color:#000;right:1230px;letter-spacing:-0.25px">119</div>
<div class="t" style="top:933.00px;font-size:13px;color:#000;right:1094px;letter-spacing:-0.25px">144</div>
<div class="t" style="top:933.00px;font-size:13px;color:#000;right:958px;letter-spacing:-0.25px">169</div>
<div class="t" style="top:933.00px;font-size:13px;color:#000;right:822px;letter-spacing:-0.25px">194</div>
<div class="t" style="top:933.00px;font-size:13px;color:#000;right:1706px;letter-spacing:-0.25px">127.59</div>
<div class="t" style="top:933.00px;font-size:13px;color:#000;right:1570px;letter-spacing:-0.25px">122.22</div>
<div class="t" style="top:933.00px;font-size:13px;color:#000;right:1434px;letter-spacing:-0.25px">130.83</div>
<div class="t" style="top:933.00px;font-size:13px;color:#000;right:1298px;letter-spacing:-0.25px">119.26</div>
<div class="t" style="top:950.00px;font-size:13px;color:#000;right:1774px;letter-spacing:-0.25px">20</div>
<div class="t" style="top:950.00px;font-size:13px;color:#000;right:1638px;letter-spacing:-0.25px">45</div>
<div class="t" style="top:950.00px;font-size:13px;color:#000;right:1502px;letter-spacing:-0.25px">70</div>
<div class="t" style="top:950.00px;font-size:13px;color:#000;right:1366px;letter-spacing:-0.25px">95</div>
<div class="t" style="top:950.00px;font-size:13px;color:#000;right:1230px;letter-spacing:-0.25px">120</div>
<div class="t" style="top:950.00px;font-size:13px;color:#000;right:1094px;letter-spacing:-0.25px">145</div>
<div class="t" style="top:950.00px;font-size:13px;color:#000;right:958px;letter-spacing:-0.25px">170</div>
<div class="t" style="top:950.00px;font-size:13px;color:#000;right:822px;letter-spacing:-0.25px">195</div>
<div class="t" style="top:950.00px;font-size:13px;color:#000;right:1706px;letter-spacing:-0.25px">123.57</div>
<div class="t" style="top:950.00px;font-size:13px;color:#000;right:1570px;letter-spacing:-0.25px">134.71</div>
<div class="t" style="top:950.00px;font-size:13px;color:#000;right:1434px;letter-spacing:-0.25px">116.68</div>
<div class="t" style="top:950.00px;font-size:13px;color:#000;right:1298px;letter-spacing:-0.25px">124.52</div>
<div class="t" style="top:967.00px;font-size:13px;color:#000;right:1774px;letter-spacing:-0.25px">21</div>
<div class="t" style="top:967.00px;font-size:13px;color:#000;right:1638px;letter-spacing:-0.25px">46</div>
<div class="t" style="top:967.00px;font-size:13px;color:#000;right:1502px;letter-spacing:-0.25px">71</div>
<div class="t" style="top:967.00px;font-size:13px;color:#000;right:1366px;letter-spacing:-0.25px">96</div>
<div class="t" style="top:967.00px;font-size:13px;color:#000;right:1230px;letter-spacing:-0.25px">121</div>
<div class="t" style="top:967.00px;font-size:13px;color:#000;right:1094px;letter-spacing:-0.25px">146</div>
<div class="t" style="top:967.00px;font-size:13px;color:#000;right:958px;letter-spacing:-0.25px">171</div>
<div class="t" style="top:967.00px;font-size:13px;color:#000;right:822px;letter-spacing:-0.25px">196</div>
<div class="t" style="top:967.00px;font-size:13px;color:#000;right:1706px;letter-spacing:-0.25px">133.76</div>
<div class="t" style="top:967.00px;font-size:13px;color:#000;right:1570px;letter-spacing:-0.25px">126.22</div>
<div class="t" style="top:967.00px;font-size:13px;color:#000;right:1434px;letter-spacing:-0.25px">114.99</div>
<div class="t" style="top:967.00px;font-size:13px;color:#000;right:1298px;letter-spacing:-0.25px">128.85</div>
<div class="t" style="top:984.00px;font-size:13px;color:#000;right:1774px;letter-spacing:-0.25px">22</div>
<div class="t" style="top:984.00px;font-size:13px;color:#000;right:1638px;letter-spacing:-0.25px">47</div>
<div class="t" style="top:984.00px;font-size:13px;color:#000;right:1502px;letter-spacing:-0.25px">72</div>
<div class="t" style="top:984.00px;font-size:13px;color:#000;right:1366px;letter-spacing:-0.25px">97</div>
<div class="t" style="top:984.00px;font-size:13px;color:#000;right:1230px;letter-spacing:-0.25px">122</div>
<div class="t" style="top:984.00px;font-size:13px;color:#000;right:1094px;letter-spacing:-0.25px">147</div>
<div class="t" style="top:984.00px;font-size:13px;color:#000;right:958px;letter-spacing:-0.25px">172</div>
<div class="t" style="top:984.00px;font-size:13px;color:#000;right:822px;letter-spacing:-0.25px">197</div>
<div class="t" style="top:984.00px;font-size:13px;color:#000;right:1706px;letter-spacing:-0.25px">124.6</div>
<div class="t" style="top:984.00px;font-size:13px;color:#000;right:1570px;letter-spacing:-0.25px">130.33</div>
<div class="t" style="top:984.00px;font-size:13px;color:#000;right:1434px;letter-spacing:-0.25px">126.69</div>
<div class="t" style="top:984.00px;font-size:13px;color:#000;right:1298px;letter-spacing:-0.25px">123.87</div>
<svg style="left:0;top:0" width="1915" height="1039"><rect x="280.5" y="276.5" width="473" height="248" fill="none" stroke="#808080" stroke-width="1"/><line x1="280" y1="483.5" x2="754" y2="483.5" stroke="#000" stroke-width="1"/><line x1="280" y1="441.5" x2="754" y2="441.5" stroke="#000" stroke-width="1"/><line x1="280" y1="400.5" x2="754" y2="400.5" stroke="#000" stroke-width="1"/><line x1="280" y1="359.5" x2="754" y2="359.5" stroke="#000" stroke-width="1"/><line x1="280" y1="317.5" x2="754" y2="317.5" stroke="#000" stroke-width="1"/><rect x="282.25" y="516.23" width="38.70" height="8.27" fill="#52b27f"/><text font-family="Liberation Sans" font-size="10.67" fill="#000" text-anchor="end" transform="translate(305.50,530) rotate(-90)">109.25</text><rect x="325.25" y="507.97" width="38.70" height="16.53" fill="#52b27f"/><text font-family="Liberation Sans" font-size="10.67" fill="#000" text-anchor="end" transform="translate(348.50,530) rotate(-90)">112.51</text><rect x="368.25" y="483.17" width="38.70" height="41.33" fill="#52b27f"/><text font-family="Liberation Sans" font-size="10.67" fill="#000" text-anchor="end" transform="translate(391.50,530) rotate(-90)">115.78</text><rect x="411.25" y="433.57" width="38.70" height="90.93" fill="#52b27f"/><text font-family="Liberation Sans" font-size="10.67" fill="#000" text-anchor="end" transform="translate(434.50,530) rotate(-90)">119.04</text><rect x="454.25" y="367.43" width="38.70" height="157.07" fill="#52b27f"/><text font-family="Liberation Sans" font-size="10.67" fill="#000" text-anchor="end" transform="translate(477.50,530) rotate(-90)">122.3</text><rect x="497.25" y="326.10" width="38.70" height="198.40" fill="#52b27f"/><text font-family="Liberation Sans" font-size="10.67" fill="#000" text-anchor="end" transform="translate(520.50,530) rotate(-90)">125.57</text><rect x="540.25" y="383.97" width="38.70" height="140.53" fill="#52b27f"/><text font-family="Liberation Sans" font-size="10.67" fill="#000" text-anchor="end" transform="translate(563.50,530) rotate(-90)">128.83</text><rect x="583.25" y="433.57" width="38.70" height="90.93" fill="#52b27f"/><text font-family="Liberation Sans" font-size="10.67" fill="#000" text-anchor="end" transform="translate(606.50,530) rotate(-90)">132.09</text><rect x="626.25" y="474.90" width="38.70" height="49.60" fill="#52b27f"/><text font-family="Liberation Sans" font-size="10.67" fill="#000" text-anchor="end" transform="translate(649.50,530) rotate(-90)">135.36</text><rect x="669.25" y="499.70" width="38.70" height="24.80" fill="#52b27f"/><text font-family="Liberation Sans" font-size="10.67" fill="#000" text-anchor="end" transform="translate(692.50,530) rotate(-90)">138.62</text><rect x="712.25" y="516.23" width="38.70" height="8.27" fill="#52b27f"/><text font-family="Liberation Sans" font-size="10.67" fill="#000" text-anchor="end" transform="translate(735.50,530) rotate(-90)">141.88</text><line x1="280.5" y1="276" x2="280.5" y2="528" stroke="#000" stroke-width="1"/><line x1="277" y1="524.5" x2="754" y2="524.5" stroke="#000" stroke-width="1"/><line x1="277" y1="524.5" x2="280" y2="524.5" stroke="#000" stroke-width="1"/><text font-family="Liberation Sans" font-size="10.67" fill="#000" text-anchor="end" x="270.5" y="528.10">0</text><line x1="277" y1="483.5" x2="280" y2="483.5" stroke="#000" stroke-width="1"/><text font-family="Liberation Sans" font-size="10.67" fill="#000" text-anchor="end" x="270.5" y="487.10">5</text><line x1="277" y1="441.5" x2="280" y2="441.5" stroke="#000" stroke-width="1"/><text font-family="Liberation Sans" font-size="10.67" fill="#000" text-anchor="end" x="270.5" y="445.10">10</text><line x1="277" y1="400.5" x2="280" y2="400.5" stroke="#000" stroke-width="1"/><text font-family="Liberation Sans" font-size="10.67" fill="#000" text-anchor="end" x="270.5" y="404.10">15</text><line x1="277" y1="359.5" x2="280" y2="359.5" stroke="#000" stroke-width="1"/><text font-family="Liberation Sans" font-size="10.67" fill="#000" text-anchor="end" x="270.5" y="363.10">20</text><line x1="277" y1="317.5" x2="280" y2="317.5" stroke="#000" stroke-width="1"/><text font-family="Liberation Sans" font-size="10.67" fill="#000" text-anchor="end" x="270.5" y="321.10">25</text><line x1="277" y1="276.5" x2="280" y2="276.5" stroke="#000" stroke-width="1"/><text font-family="Liberation Sans" font-size="10.67" fill="#000" text-anchor="end" x="270.5" y="280.10">30</text><line x1="280.5" y1="524" x2="280.5" y2="528" stroke="#000" stroke-width="1"/><line x1="323.5" y1="524" x2="323.5" y2="528" stroke="#000" stroke-width="1"/><line x1="366.5" y1="524" x2="366.5" y2="528" stroke="#000" stroke-width="1"/><line x1="409.5" y1="524" x2="409.5" y2="528" stroke="#000" stroke-width="1"/><line x1="452.5" y1="524" x2="452.5" y2="528" stroke="#000" stroke-width="1"/><line x1="495.5" y1="524" x2="495.5" y2="528" stroke="#000" stroke-width="1"/><line x1="538.5" y1="524" x2="538.5" y2="528" stroke="#000" stroke-width="1"/><line x1="581.5" y1="524" x2="581.5" y2="528" stroke="#000" stroke-width="1"/><line x1="624.5" y1="524" x2="624.5" y2="528" stroke="#000" stroke-width="1"/><line x1="667.5" y1="524" x2="667.5" y2="528" stroke="#000" stroke-width="1"/><line x1="710.5" y1="524" x2="710.5" y2="528" stroke="#000" stroke-width="1"/><line x1="753.5" y1="524" x2="753.5" y2="528" stroke="#000" stroke-width="1"/><text font-family="Liberation Sans" font-size="10.67" font-weight="700" fill="#000" text-anchor="middle" transform="translate(247,415) rotate(-90)">Frequency of Occurance</text><text font-family="Liberation Sans" font-size="10.67" font-weight="700" fill="#000" text-anchor="middle" x="506" y="573">Bins</text><line x1="823" y1="492.5" x2="1226" y2="492.5" stroke="#000" stroke-width="1"/><line x1="823" y1="456.5" x2="1226" y2="456.5" stroke="#000" stroke-width="1"/><line x1="823" y1="421.5" x2="1226" y2="421.5" stroke="#000" stroke-width="1"/><line x1="823" y1="385.5" x2="1226" y2="385.5" stroke="#000" stroke-width="1"/><line x1="823" y1="350.5" x2="1226" y2="350.5" stroke="#000" stroke-width="1"/><line x1="823" y1="314.5" x2="1226" y2="314.5" stroke="#000" stroke-width="1"/><line x1="823" y1="279.5" x2="1226" y2="279.5" stroke="#000" stroke-width="1"/><rect x="850.42" y="380.50" width="79.5" height="146.50" fill="#7f7f7f"/><text font-family="Liberation Sans" font-size="12" font-weight="700" fill="#fff" text-anchor="middle" x="890.17" y="400.00">0.8</text><text font-family="Liberation Sans" font-size="11.5" fill="#000" text-anchor="middle" x="890.17" y="549">Cp</text><rect x="984.75" y="387.94" width="79.5" height="139.06" fill="#52b27f"/><text font-family="Liberation Sans" font-size="12" font-weight="700" fill="#fff" text-anchor="middle" x="1024.50" y="407.44">0.8</text><text font-family="Liberation Sans" font-size="11.5" fill="#000" text-anchor="middle" x="1024.50" y="549">CpK</text><rect x="1119.08" y="294.94" width="79.5" height="232.06" fill="#943634"/><text font-family="Liberation Sans" font-size="12" font-weight="700" fill="#fff" text-anchor="middle" x="1158.83" y="316.94">1.3</text><text font-family="Liberation Sans" font-size="11.5" fill="#000" text-anchor="middle" x="1158.83" y="549">Target Cpk</text><line x1="823.5" y1="279" x2="823.5" y2="528" stroke="#868686" stroke-width="1"/><line x1="823" y1="527.5" x2="1226" y2="527.5" stroke="#868686" stroke-width="1"/><text font-family="Liberation Sans" font-size="11.5" fill="#000" text-anchor="end" x="811" y="531.00">0.0</text><text font-family="Liberation Sans" font-size="11.5" fill="#000" text-anchor="end" x="811" y="496.00">0.2</text><text font-family="Liberation Sans" font-size="11.5" fill="#000" text-anchor="end" x="811" y="460.00">0.4</text><text font-family="Liberation Sans" font-size="11.5" fill="#000" text-anchor="end" x="811" y="425.00">0.6</text><text font-family="Liberation Sans" font-size="11.5" fill="#000" text-anchor="end" x="811" y="389.00">0.8</text><text font-family="Liberation Sans" font-size="11.5" fill="#000" text-anchor="end" x="811" y="354.00">1.0</text><text font-family="Liberation Sans" font-size="11.5" fill="#000" text-anchor="end" x="811" y="318.00">1.2</text><text font-family="Liberation Sans" font-size="11.5" fill="#000" text-anchor="end" x="811" y="283.00">1.4</text></svg>
<svg style="left:1380px;top:0px;" width="535" height="33" viewBox="0 0 535 33"><g stroke="#1d6a3f" stroke-width="2" fill="none"><line x1="50" y1="14" x2="227" y2="14"/><circle cx="50" cy="14" r="3"/><circle cx="227" cy="14" r="3"/><line x1="227" y1="14" x2="300" y2="14"/><circle cx="345" cy="30" r="26"/><circle cx="345" cy="30" r="14"/><path d="M410 33 L450 26 L535 26"/><path d="M470 33 L500 18 L535 18"/><circle cx="55" cy="42" r="14"/><circle cx="95" cy="33" r="3"/></g></svg>
<div class="t" style="left:23.00px;top:11.22px;font-size:12.5px;color:#fff;transform:scaleX(0.923);transform-origin:0 0;">AutoSave</div>
<div style="left:80px;top:8px;width:38px;height:16px;border:1px solid #fff;border-radius:9px;box-sizing:border-box"></div>
<div style="left:84px;top:12px;width:8px;height:8px;background:#fff;border-radius:50%"></div>
<div class="t" style="left:98.60px;top:11.07px;font-size:11.5px;color:#fff;transform:scaleX(0.883);transform-origin:0 0;">Off</div>
<svg style="left:132px;top:9px;" width="18" height="18" viewBox="0 0 18 18"><g fill="none" stroke="#fff" stroke-width="1.2"><path d="M1.5 1.5h15v15h-12.5l-2.5-2.5z"/><path d="M4.5 1.5v5h9v-5"/><path d="M5 16.5v-6h8v6"/></g></svg>
<svg style="left:161px;top:9px;" width="18" height="18" viewBox="0 0 18 18"><g fill="none" stroke="#6fa888" stroke-width="1.3"><path d="M3 2v6h6"/><path d="M3.5 8A6.5 6.5 0 1 1 8 16"/></g></svg>
<svg style="left:183.0px;top:13.25px" width="7" height="5.5"><polyline points="1,1.5 3.5,4.0 6,1.5" fill="none" stroke="#6fa888" stroke-width="1.2"/></svg>
<svg style="left:200px;top:9px;" width="18" height="18" viewBox="0 0 18 18"><g fill="none" stroke="#6fa888" stroke-width="1.3"><path d="M15 2v6h-6"/><path d="M14.5 8A6.5 6.5 0 1 0 10 16"/></g></svg>
<svg style="left:221.5px;top:13.25px" width="7" height="5.5"><polyline points="1,1.5 3.5,4.0 6,1.5" fill="none" stroke="#6fa888" stroke-width="1.2"/></svg>
<svg style="left:243px;top:12px;" width="10" height="10" viewBox="0 0 10 10"><g fill="none" stroke="#fff" stroke-width="1.2"><line x1="1" y1="1.5" x2="9" y2="1.5"/><polyline points="1.5,4 5,7.5 8.5,4"/></g></svg>
<div class="t" style="left:416.00px;top:11.22px;font-size:12.5px;color:#fff;transform:scaleX(0.926);transform-origin:0 0;">Process Capability&nbsp; -&nbsp; Read-Only&nbsp; -&nbsp; Excel</div>
<div style="left:787px;top:6px;width:366px;height:22px;background:#a1d0b2"></div>
<svg style="left:805px;top:9px;" width="17" height="16" viewBox="0 0 17 16"><g fill="none" stroke="#2b4a37" stroke-width="1.3"><circle cx="10.5" cy="6" r="4.8"/><line x1="7" y1="9.5" x2="1.5" y2="15"/></g></svg>
<div class="t" style="left:836.20px;top:11.64px;font-size:12px;color:#2b4a37;transform:scaleX(0.904);transform-origin:0 0;">Search</div>
<div class="t" style="left:1638.00px;top:11.92px;font-size:12.5px;color:#fff;transform:scaleX(0.902);transform-origin:0 0;">Joe Smith</div>
<svg style="left:1699px;top:4px;" width="25" height="25" viewBox="0 0 25 25"><defs><clipPath id="av"><circle cx="12.5" cy="12.7" r="11.8"/></clipPath></defs><g clip-path="url(#av)"><rect width="25" height="25" fill="#4d4640"/><ellipse cx="11" cy="10" rx="7" ry="8" fill="#e9e4dc"/><ellipse cx="15" cy="6" rx="5" ry="4" fill="#f4f1ea"/><ellipse cx="7" cy="17" rx="5" ry="5" fill="#8d7f78"/><circle cx="9" cy="9" r="1.3" fill="#3a2f2a"/><circle cx="13.5" cy="9.5" r="1.2" fill="#3a2f2a"/><ellipse cx="11.5" cy="15" rx="2.5" ry="2" fill="#3a2f2a"/><ellipse cx="19" cy="17" rx="4" ry="5" fill="#d8d2c8"/><circle cx="21" cy="21" r="3" fill="#2d2a26"/><circle cx="3" cy="8" r="3" fill="#2f3b33"/></g></svg>
<svg style="left:1751px;top:10px;" width="16" height="13" viewBox="0 0 16 13"><g fill="none" stroke="#fff" stroke-width="1"><rect x="0.5" y="0.5" width="14" height="11"/><line x1="0.5" y1="3.5" x2="14.5" y2="3.5"/><polyline points="5,8 7.5,5.5 10,8"/><line x1="7.5" y1="5.5" x2="7.5" y2="11"/></g></svg>
<div style="left:1800px;top:16px;width:11px;height:1px;background:#fff"></div>
<svg style="left:1845px;top:11px;" width="12" height="11" viewBox="0 0 12 11"><g fill="none" stroke="#fff" stroke-width="1"><rect x="0.5" y="2.5" width="8" height="8"/><polyline points="2.5,2.5 2.5,0.5 10.5,0.5 10.5,8.5 8.5,8.5"/></g></svg>
<svg style="left:1891px;top:11px;" width="12" height="11" viewBox="0 0 12 11"><g stroke="#fff" stroke-width="1.2"><line x1="1" y1="0.5" x2="11" y2="10.5"/><line x1="11" y1="0.5" x2="1" y2="10.5"/></g></svg>
<div class="t" style="left:17.50px;top:44.22px;font-size:12.5px;color:#323130;transform:scaleX(0.889);transform-origin:0 0;">File</div>
<div class="t" style="left:68.50px;top:44.22px;font-size:12.5px;color:#262626;transform:scaleX(1.094);transform-origin:0 0;font-weight:600">Home</div>
<div class="t" style="left:133.20px;top:44.22px;font-size:12.5px;color:#323130;transform:scaleX(1.018);transform-origin:0 0;">Insert</div>
<div class="t" style="left:196.40px;top:44.22px;font-size:12.5px;color:#323130;">Page Layout</div>
<div class="t" style="left:296.80px;top:44.22px;font-size:12.5px;color:#323130;transform:scaleX(1.013);transform-origin:0 0;">Formulas</div>
<div class="t" style="left:379.30px;top:44.22px;font-size:12.5px;color:#323130;transform:scaleX(0.987);transform-origin:0 0;">Data</div>
<div class="t" style="left:435.20px;top:44.22px;font-size:12.5px;color:#323130;transform:scaleX(0.961);transform-origin:0 0;">Review</div>
<div class="t" style="left:503.00px;top:44.22px;font-size:12.5px;color:#323130;transform:scaleX(0.993);transform-origin:0 0;">View</div>
<div class="t" style="left:558.20px;top:44.22px;font-size:12.5px;color:#323130;transform:scaleX(1.012);transform-origin:0 0;">Help</div>
<div style="left:68px;top:59px;width:38px;height:3px;background:#217346"></div>
<div style="left:1733px;top:37px;width:66px;height:23px;background:#fff;border:1px solid #e1dfdd;box-sizing:border-box"></div>
<svg style="left:1739px;top:41px;" width="14" height="14" viewBox="0 0 14 14"><g fill="none" stroke="#217346" stroke-width="1.1"><path d="M1.5 5.5v7h10v-3"/><path d="M4.5 10c1-4 4-5.5 7-5.5"/><polyline points="9.5,2 12.5,4.5 9.5,7"/></g></svg>
<div class="t" style="left:1756.40px;top:44.22px;font-size:12.5px;color:#217346;transform:scaleX(1.007);transform-origin:0 0;">Share</div>
<div style="left:1809px;top:37px;width:98px;height:23px;background:#fff;border:1px solid #e1dfdd;box-sizing:border-box"></div>
<svg style="left:1816px;top:42px;" width="12" height="13" viewBox="0 0 12 13"><g fill="none" stroke="#217346" stroke-width="1.1"><path d="M0.5 0.5h10.5v7.5h-7l-3 3v-3h-0.5z"/></g></svg>
<div class="t" style="left:1831.70px;top:44.22px;font-size:12.5px;color:#217346;transform:scaleX(1.090);transform-origin:0 0;">Comments</div>
<svg style="left:14px;top:71px;" width="34" height="34" viewBox="0 0 34 34"><path d="M4.5 5.5h4v-2h12v2h4v24h-20z" fill="#fdfaf4" stroke="#d39d38" stroke-width="1.6"/><path d="M9 6.5v-3.5h3.5a2 2 0 0 1 4 0h3.5v3.5z" fill="#fff" stroke="#444" stroke-width="1"/><rect x="17.5" y="14.5" width="13" height="17" fill="#fff" stroke="#262626" stroke-width="1.3"/></svg>
<div class="t" style="left:15.80px;top:107.57px;font-size:11.5px;color:#323130;transform:scaleX(0.926);transform-origin:0 0;">Paste</div>
<svg style="left:24.5px;top:125.5px" width="8" height="6.0"><polyline points="1,1.5 4.0,4.5 7,1.5" fill="none" stroke="#3a3a3a" stroke-width="1.2"/></svg>
<svg style="left:55px;top:70px;" width="13" height="18" viewBox="0 0 13 18"><g fill="none" stroke="#444" stroke-width="1"><line x1="2" y1="1" x2="9" y2="12"/><line x1="10" y1="1" x2="3" y2="12"/></g><g fill="none" stroke="#3b8fd1" stroke-width="1.3"><circle cx="3" cy="14.5" r="2"/><circle cx="10" cy="14.5" r="2"/></g></svg>
<div class="t" style="left:72.40px;top:74.67px;font-size:11.5px;color:#323130;transform:scaleX(1.040);transform-origin:0 0;">Cut</div>
<svg style="left:52px;top:94px;" width="18" height="18" viewBox="0 0 18 18"><g fill="none" stroke="#262626" stroke-width="1.1"><path d="M6.5 3.5v-2h-4.5v12.5h4"/><path d="M6.5 4.5h5.5l3.5 3.5v9.5h-9z"/><path d="M11.5 4.5v4h4"/><line x1="8.5" y1="11.5" x2="13.5" y2="11.5"/><line x1="8.5" y1="14" x2="13.5" y2="14"/></g></svg>
<div class="t" style="left:72.40px;top:98.87px;font-size:11.5px;color:#323130;transform:scaleX(1.028);transform-origin:0 0;">Copy</div>
<svg style="left:109.6px;top:100.0px" width="8" height="6.0"><polyline points="1,1.5 4.0,4.5 7,1.5" fill="none" stroke="#3a3a3a" stroke-width="1.2"/></svg>
<svg style="left:52px;top:117px;" width="18" height="18" viewBox="0 0 18 18"><path d="M1.5 10l5 6 4-4-3-5z" fill="#f4c27a" stroke="#e08a1e" stroke-width="1.1"/><path d="M9 9l5-5 1.5 1.5-5 5" fill="none" stroke="#262626" stroke-width="1.2"/><line x1="12" y1="5" x2="16" y2="1" stroke="#262626" stroke-width="1.5"/></svg>
<div class="t" style="left:72.40px;top:122.67px;font-size:11.5px;color:#323130;transform:scaleX(1.017);transform-origin:0 0;">Format Painter</div>
<div class="t" style="left:48.90px;top:146.67px;font-size:11.5px;color:#444;">Clipboard</div>
<svg style="left:153px;top:148px;" width="9" height="9" viewBox="0 0 9 9"><g fill="none" stroke="#3a3a3a" stroke-width="1.1"><polyline points="0.5,6.5 0.5,0.5 6.5,0.5"/><line x1="3" y1="3" x2="7.5" y2="7.5"/><polyline points="3.5,7.5 7.5,7.5 7.5,3.5"/></g></svg>
<div style="left:164px;top:69px;width:1px;height:87px;background:#c8c6c4"></div>
<div style="left:173px;top:76px;width:166px;height:23px;background:#fff;border:1px solid #c8c6c4;box-sizing:border-box"></div>
<div style="left:296px;top:77px;width:1px;height:21px;background:#c8c6c4"></div>
<div class="t" style="left:176.30px;top:82.77px;font-size:11.5px;color:#262626;transform:scaleX(1.030);transform-origin:0 0;">Arial</div>
<svg style="left:285.0px;top:85.3px" width="8" height="6.0"><polyline points="1,1.5 4.0,4.5 7,1.5" fill="none" stroke="#3a3a3a" stroke-width="1.2"/></svg>
<div class="t" style="left:299.70px;top:82.77px;font-size:11.5px;color:#262626;transform:scaleX(0.830);transform-origin:0 0;">10</div>
<svg style="left:328.7px;top:85.3px" width="8" height="6.0"><polyline points="1,1.5 4.0,4.5 7,1.5" fill="none" stroke="#3a3a3a" stroke-width="1.2"/></svg>
<div class="t" style="left:343.00px;top:80.65px;font-size:14px;color:#444;transform:scaleX(1.130);transform-origin:0 0;">A</div>
<svg style="left:354px;top:78px;" width="6" height="5" viewBox="0 0 6 5"><polyline points="0.5,4 3,1 5.5,4" fill="none" stroke="#3b8fd1" stroke-width="1"/></svg>
<div class="t" style="left:366.80px;top:82.77px;font-size:11.5px;color:#444;transform:scaleX(1.129);transform-origin:0 0;">A</div>
<svg style="left:376px;top:80px;" width="6" height="5" viewBox="0 0 6 5"><polyline points="0.5,1 3,4 5.5,1" fill="none" stroke="#3b8fd1" stroke-width="1"/></svg>
<div style="left:173px;top:108px;width:22px;height:23px;background:#c8c6c4"></div>
<div class="t" style="left:180.70px;top:112.62px;font-size:12.5px;color:#262626;font-weight:700;transform:scaleX(0.789);transform-origin:0 0;">B</div>
<div class="t" style="left:202.5px;top:111.4px;font-size:14px;font-style:italic;font-family:'Liberation Serif';color:#262626">I</div>
<div class="t" style="left:223.30px;top:113.04px;font-size:12px;color:#262626;transform:scaleX(1.007);transform-origin:0 0;">U</div>
<div style="left:223px;top:124px;width:9px;height:1px;background:#262626"></div>
<svg style="left:241.6px;top:116.3px" width="8" height="6.0"><polyline points="1,1.5 4.0,4.5 7,1.5" fill="none" stroke="#3a3a3a" stroke-width="1.2"/></svg>
<div style="left:258px;top:109px;width:1px;height:20px;background:#c8c6c4"></div>
<svg style="left:265px;top:110px;" width="17" height="17" viewBox="0 0 17 17"><g fill="none" stroke="#444" stroke-width="1" stroke-dasharray="1 1"><rect x="0.5" y="0.5" width="15" height="14"/><line x1="8" y1="0" x2="8" y2="15"/><line x1="0" y1="7.5" x2="16" y2="7.5"/></g><line x1="0" y1="15" x2="16" y2="15" stroke="#262626" stroke-width="1.5"/></svg>
<svg style="left:287.3px;top:116.3px" width="8" height="6.0"><polyline points="1,1.5 4.0,4.5 7,1.5" fill="none" stroke="#3a3a3a" stroke-width="1.2"/></svg>
<div style="left:304px;top:109px;width:1px;height:20px;background:#c8c6c4"></div>
<svg style="left:311px;top:110px;" width="18" height="18" viewBox="0 0 18 18"><path d="M4 7l5-5 5 5-4.5 4.5z" fill="#fff" stroke="#444" stroke-width="1"/><path d="M13 5q2 1 2 3" fill="none" stroke="#3b8fd1" stroke-width="1.2"/><rect x="1" y="12.5" width="16" height="4.5" fill="#f3ed33"/></svg>
<svg style="left:333.3px;top:116.3px" width="8" height="6.0"><polyline points="1,1.5 4.0,4.5 7,1.5" fill="none" stroke="#3a3a3a" stroke-width="1.2"/></svg>
<div class="t" style="left:352.40px;top:111.32px;font-size:12.5px;color:#444;transform:scaleX(1.146);transform-origin:0 0;">A</div>
<div style="left:349px;top:122.6px;width:16px;height:4.6px;background:#d01e1e"></div>
<svg style="left:370.5px;top:116.3px" width="8" height="6.0"><polyline points="1,1.5 4.0,4.5 7,1.5" fill="none" stroke="#3a3a3a" stroke-width="1.2"/></svg>
<div class="t" style="left:257.50px;top:146.67px;font-size:11.5px;color:#444;">Font</div>
<svg style="left:379px;top:148px;" width="9" height="9" viewBox="0 0 9 9"><g fill="none" stroke="#3a3a3a" stroke-width="1.1"><polyline points="0.5,6.5 0.5,0.5 6.5,0.5"/><line x1="3" y1="3" x2="7.5" y2="7.5"/><polyline points="3.5,7.5 7.5,7.5 7.5,3.5"/></g></svg>
<div style="left:390px;top:69px;width:1px;height:87px;background:#c8c6c4"></div>
<div style="left:443px;top:76px;width:22px;height:23px;background:#c8c6c4"></div>
<div style="left:403px;top:79px;width:14px;height:1.3px;background:#262626"></div><div style="left:405px;top:83px;width:10px;height:1.3px;background:#262626"></div><div style="left:403px;top:87px;width:14px;height:1.3px;background:#262626"></div>
<div style="left:425px;top:82px;width:14px;height:1.3px;background:#262626"></div><div style="left:427px;top:86px;width:10px;height:1.3px;background:#262626"></div><div style="left:425px;top:90px;width:14px;height:1.3px;background:#262626"></div>
<div style="left:447px;top:86.5px;width:14px;height:1.3px;background:#262626"></div><div style="left:449px;top:90.5px;width:10px;height:1.3px;background:#262626"></div><div style="left:447px;top:94.5px;width:14px;height:1.3px;background:#262626"></div>
<div style="left:469px;top:77px;width:1px;height:20px;background:#c8c6c4"></div>
<svg style="left:475px;top:77px;" width="20" height="19" viewBox="0 0 20 19"><text x="2" y="11" font-family="Liberation Sans" font-size="10" fill="#444" transform="rotate(-45 7 8)">ab</text><g stroke="#3b8fd1" stroke-width="1.2" fill="none"><line x1="5" y1="17" x2="17.5" y2="4.5"/><polyline points="12,4.5 17.5,4.5 17.5,10"/></g></svg>
<svg style="left:496.4px;top:84.2px" width="8" height="6.0"><polyline points="1,1.5 4.0,4.5 7,1.5" fill="none" stroke="#3a3a3a" stroke-width="1.2"/></svg>
<div style="left:522px;top:75px;width:1px;height:57px;background:#c8c6c4"></div>
<svg style="left:532px;top:80px;" width="16" height="16" viewBox="0 0 16 16"><text x="0" y="7" font-family="Liberation Sans" font-size="8.5" fill="#444">ab</text><text x="0" y="14.5" font-family="Liberation Sans" font-size="8.5" fill="#444">c</text><path d="M13 7.5q2.5 0 2.5 3t-3 3h-5" fill="none" stroke="#3b8fd1" stroke-width="1.2"/><polyline points="9.5,11 7,13.5 9.5,16" fill="none" stroke="#3b8fd1" stroke-width="1.2"/></svg>
<div class="t" style="left:549.40px;top:82.67px;font-size:11.5px;color:#323130;">Wrap Text</div>
<div style="left:421px;top:108px;width:22px;height:23px;background:#c8c6c4"></div>
<div style="left:403px;top:112.5px;width:14px;height:1.3px;background:#262626"></div><div style="left:403px;top:116.5px;width:9px;height:1.3px;background:#262626"></div><div style="left:403px;top:120.5px;width:14px;height:1.3px;background:#262626"></div><div style="left:403px;top:124.5px;width:9px;height:1.3px;background:#262626"></div>
<div style="left:425px;top:112.5px;width:14px;height:1.3px;background:#262626"></div><div style="left:427px;top:116.5px;width:10px;height:1.3px;background:#262626"></div><div style="left:425px;top:120.5px;width:14px;height:1.3px;background:#262626"></div><div style="left:427px;top:124.5px;width:10px;height:1.3px;background:#262626"></div>
<div style="left:447px;top:112.5px;width:14px;height:1.3px;background:#262626"></div><div style="left:452px;top:116.5px;width:9px;height:1.3px;background:#262626"></div><div style="left:447px;top:120.5px;width:14px;height:1.3px;background:#262626"></div><div style="left:452px;top:124.5px;width:9px;height:1.3px;background:#262626"></div>
<div style="left:469px;top:109px;width:1px;height:20px;background:#c8c6c4"></div>
<div style="left:478px;top:112.5px;width:14px;height:1.3px;background:#262626"></div><div style="left:485px;top:116.5px;width:7px;height:1.3px;background:#262626"></div><div style="left:485px;top:120.5px;width:7px;height:1.3px;background:#262626"></div><div style="left:478px;top:124.5px;width:14px;height:1.3px;background:#262626"></div>
<svg style="left:477px;top:114px;" width="7" height="8" viewBox="0 0 7 8"><polyline points="5,0.5 1,4 5,7.5" fill="none" stroke="#3b8fd1" stroke-width="1.1"/><line x1="1" y1="4" x2="7" y2="4" stroke="#3b8fd1" stroke-width="1.1"/></svg>
<div style="left:500px;top:112.5px;width:14px;height:1.3px;background:#262626"></div><div style="left:507px;top:116.5px;width:7px;height:1.3px;background:#262626"></div><div style="left:507px;top:120.5px;width:7px;height:1.3px;background:#262626"></div><div style="left:500px;top:124.5px;width:14px;height:1.3px;background:#262626"></div>
<svg style="left:500px;top:114px;" width="7" height="8" viewBox="0 0 7 8"><polyline points="2,0.5 6,4 2,7.5" fill="none" stroke="#3b8fd1" stroke-width="1.1"/><line x1="0" y1="4" x2="6" y2="4" stroke="#3b8fd1" stroke-width="1.1"/></svg>
<div style="left:527px;top:108px;width:130px;height:23px;background:#c8c6c4"></div>
<svg style="left:530px;top:111px;" width="16" height="15" viewBox="0 0 16 15"><rect x="0.5" y="0.5" width="15" height="14" fill="#fff" stroke="#262626" stroke-width="1.1"/><rect x="1" y="4.5" width="14" height="6" fill="#d5e8f8"/><g stroke="#262626" stroke-width="1"><line x1="0.5" y1="4.5" x2="15.5" y2="4.5"/><line x1="0.5" y1="10.5" x2="15.5" y2="10.5"/><line x1="7.5" y1="0.5" x2="7.5" y2="4.5"/><line x1="7.5" y1="10.5" x2="7.5" y2="14.5"/></g><g stroke="#3b8fd1" stroke-width="1.1" fill="none"><line x1="2.5" y1="7.5" x2="13.5" y2="7.5"/><polyline points="4.5,5.5 2.5,7.5 4.5,9.5"/><polyline points="11.5,5.5 13.5,7.5 11.5,9.5"/></g></svg>
<div class="t" style="left:549.40px;top:114.77px;font-size:11.5px;color:#323130;transform:scaleX(1.041);transform-origin:0 0;">Merge &amp; Center</div>
<svg style="left:643.3px;top:116.4px" width="8" height="6.0"><polyline points="1,1.5 4.0,4.5 7,1.5" fill="none" stroke="#3a3a3a" stroke-width="1.2"/></svg>
<div class="t" style="left:493.50px;top:146.57px;font-size:11.5px;color:#444;transform:scaleX(1.021);transform-origin:0 0;">Alignment</div>
<svg style="left:652px;top:148px;" width="9" height="9" viewBox="0 0 9 9"><g fill="none" stroke="#3a3a3a" stroke-width="1.1"><polyline points="0.5,6.5 0.5,0.5 6.5,0.5"/><line x1="3" y1="3" x2="7.5" y2="7.5"/><polyline points="3.5,7.5 7.5,7.5 7.5,3.5"/></g></svg>
<div style="left:664px;top:69px;width:1px;height:87px;background:#c8c6c4"></div>
<div style="left:673px;top:76px;width:134px;height:23px;background:#fff;border:1px solid #c8c6c4;box-sizing:border-box"></div>
<div class="t" style="left:676.40px;top:82.97px;font-size:11.5px;color:#262626;transform:scaleX(0.943);transform-origin:0 0;">General</div>
<svg style="left:796.2px;top:85.3px" width="8" height="6.0"><polyline points="1,1.5 4.0,4.5 7,1.5" fill="none" stroke="#3a3a3a" stroke-width="1.2"/></svg>
<div class="t" style="left:679.60px;top:113.45px;font-size:14px;color:#444;transform:scaleX(1.068);transform-origin:0 0;">$</div>
<svg style="left:698.0px;top:116.55px" width="7" height="5.5"><polyline points="1,1.5 3.5,4.0 6,1.5" fill="none" stroke="#3a3a3a" stroke-width="1.2"/></svg>
<div class="t" style="left:713.30px;top:114.45px;font-size:14px;color:#444;transform:scaleX(1.228);transform-origin:0 0;">%</div>
<svg style="left:738px;top:112px;" width="10" height="14" viewBox="0 0 10 14"><circle cx="5.5" cy="4.5" r="3.3" fill="#262626"/><path d="M8.6 4.5q0.4 5.5-5.5 8.5l-0.6-0.9q3.6-2.3 3.8-5.2z" fill="#262626"/></svg>
<div style="left:758px;top:110px;width:1px;height:19px;background:#c8c6c4"></div>
<svg style="left:765px;top:110px;" width="18" height="17" viewBox="0 0 18 17"><text x="9" y="8" font-family="Liberation Sans" font-size="9.5" fill="#444">0</text><text x="3" y="16.5" font-family="Liberation Sans" font-size="9.5" fill="#444">.00</text><g stroke="#3b8fd1" stroke-width="1.1" fill="none"><line x1="1.5" y1="4.5" x2="8" y2="4.5"/><polyline points="4,2 1.5,4.5 4,7"/></g></svg>
<svg style="left:787px;top:110px;" width="18" height="17" viewBox="0 0 18 17"><text x="3" y="8" font-family="Liberation Sans" font-size="9.5" fill="#444">.00</text><text x="10" y="16.5" font-family="Liberation Sans" font-size="9.5" fill="#444">0</text><g stroke="#3b8fd1" stroke-width="1.1" fill="none"><line x1="1.5" y1="12.5" x2="9" y2="12.5"/><polyline points="6.5,10 9,12.5 6.5,15"/></g></svg>
<div class="t" style="left:711.70px;top:146.67px;font-size:11.5px;color:#444;transform:scaleX(0.976);transform-origin:0 0;">Number</div>
<svg style="left:803px;top:148px;" width="9" height="9" viewBox="0 0 9 9"><g fill="none" stroke="#3a3a3a" stroke-width="1.1"><polyline points="0.5,6.5 0.5,0.5 6.5,0.5"/><line x1="3" y1="3" x2="7.5" y2="7.5"/><polyline points="3.5,7.5 7.5,7.5 7.5,3.5"/></g></svg>
<div style="left:814px;top:69px;width:1px;height:87px;background:#c8c6c4"></div>
<svg style="left:845px;top:74px;" width="30" height="24" viewBox="0 0 30 24"><rect x="1" y="1" width="27" height="21" fill="#fff" stroke="#262626" stroke-width="1.2"/><rect x="6" y="2" width="12" height="5" fill="#f2878d"/><rect x="6" y="15" width="14" height="6" fill="#f2878d"/><rect x="6" y="8" width="7" height="6" fill="#7fb2e5"/><rect x="13" y="8" width="7" height="6" fill="#fff"/><g stroke="#262626" stroke-width="1"><line x1="6" y1="1" x2="6" y2="22"/><line x1="20.5" y1="1" x2="20.5" y2="22"/><line x1="1" y1="7.5" x2="28" y2="7.5"/><line x1="1" y1="14.5" x2="28" y2="14.5"/><line x1="24.5" y1="1" x2="24.5" y2="22"/></g></svg>
<div class="t" style="left:830.00px;top:107.97px;font-size:11.5px;color:#323130;transform:scaleX(1.048);transform-origin:0 0;">Conditional</div>
<div class="t" style="left:825.80px;top:123.67px;font-size:11.5px;color:#323130;transform:scaleX(1.044);transform-origin:0 0;">Formatting</div>
<svg style="left:886.8px;top:125.25px" width="7" height="5.5"><polyline points="1,1.5 3.5,4.0 6,1.5" fill="none" stroke="#3a3a3a" stroke-width="1.2"/></svg>
<svg style="left:911px;top:74px;" width="32" height="28" viewBox="0 0 32 28"><rect x="1" y="1" width="27" height="21" fill="#fff" stroke="#262626" stroke-width="1.2"/><rect x="10" y="8" width="18" height="14" fill="#7fb2e5"/><g stroke="#262626" stroke-width="1"><line x1="10" y1="1" x2="10" y2="22"/><line x1="19" y1="1" x2="19" y2="22"/><line x1="1" y1="7.5" x2="28" y2="7.5"/><line x1="1" y1="14.5" x2="28" y2="14.5"/></g><path d="M30 5.5l-1.8-1.8-11 10.5 3 3z" fill="#fff" stroke="#262626" stroke-width="1.1"/><path d="M16.5 14.5q-3.5 0.5-4.5 4.5q-1 3-5 4.5q6 1.5 9.5-1.5q2.5-2.5 2.8-4.5z" fill="#4a90d0" stroke="#2f6fb5" stroke-width="0.8"/></svg>
<div class="t" style="left:900.50px;top:107.97px;font-size:11.5px;color:#323130;transform:scaleX(0.989);transform-origin:0 0;">Format as</div>
<div class="t" style="left:907.50px;top:123.67px;font-size:11.5px;color:#323130;transform:scaleX(0.971);transform-origin:0 0;">Table</div>
<svg style="left:936.9px;top:125.25px" width="7" height="5.5"><polyline points="1,1.5 3.5,4.0 6,1.5" fill="none" stroke="#3a3a3a" stroke-width="1.2"/></svg>
<div style="left:956px;top:70px;width:441px;height:62px;background:#fff;border:1px solid #d2d0ce;box-sizing:border-box"></div>
<div class="t" style="left:964.40px;top:79.83px;font-size:13.2px;color:#000;transform:scaleX(0.960);transform-origin:0 0;">Normal 2</div>
<div class="t" style="left:1070.10px;top:79.83px;font-size:13.2px;color:#000;transform:scaleX(0.968);transform-origin:0 0;">Normal 2 2</div>
<div style="left:1169px;top:73px;width:106px;height:28px;border:3px solid #c0c0c0;box-sizing:border-box;background:#fff"></div>
<div class="t" style="left:1176.30px;top:80.43px;font-size:13.2px;color:#000;transform:scaleX(0.921);transform-origin:0 0;">Normal</div>
<div style="left:1278px;top:76px;width:100px;height:22px;background:#ffc7ce"></div>
<div class="t" style="left:1282.50px;top:80.43px;font-size:13.2px;color:#9c0006;transform:scaleX(0.898);transform-origin:0 0;">Bad</div>
<div style="left:960px;top:104px;width:100px;height:22px;background:#c6efce"></div>
<div class="t" style="left:964.40px;top:108.23px;font-size:13.2px;color:#006100;transform:scaleX(0.995);transform-origin:0 0;">Good</div>
<div style="left:1066px;top:104px;width:100px;height:22px;background:#ffeb9c"></div>
<div class="t" style="left:1070.10px;top:108.23px;font-size:13.2px;color:#9c5700;transform:scaleX(1.078);transform-origin:0 0;">Neutral</div>
<div style="left:1172px;top:104px;width:100px;height:22px;background:#f2f2f2;border:1px solid #7f7f7f;box-sizing:border-box"></div>
<div class="t" style="left:1176.30px;top:108.23px;font-size:13.2px;color:#fa7d00;font-weight:700;transform:scaleX(0.959);transform-origin:0 0;">Calculation</div>
<div style="left:1278px;top:104px;width:100px;height:22px;background:#a5a5a5;border:1px solid #3f3f3f;box-sizing:border-box;box-shadow:inset 0 0 0 1px #a5a5a5,inset 0 0 0 2px #3f3f3f"></div>
<div class="t" style="left:1282.90px;top:108.23px;font-size:13.2px;color:#fff;font-weight:700;transform:scaleX(0.927);transform-origin:0 0;">Check Cell</div>
<div style="left:1382px;top:70px;width:15px;height:62px;background:#f3f2f1;border:1px solid #d2d0ce;box-sizing:border-box"></div>
<div style="left:1382px;top:90px;width:15px;height:1px;background:#d2d0ce"></div>
<div style="left:1382px;top:110px;width:15px;height:1px;background:#d2d0ce"></div>
<svg style="left:1385px;top:77px;" width="9" height="6" viewBox="0 0 9 6"><polyline points="1,5 4.5,1.5 8,5" fill="none" stroke="#b0b0b0" stroke-width="1"/></svg>
<svg style="left:1385.5px;top:97.0px" width="8" height="6.0"><polyline points="1,1.5 4.0,4.5 7,1.5" fill="none" stroke="#3a3a3a" stroke-width="1.2"/></svg>
<div style="left:1386px;top:116px;width:7px;height:1px;background:#444"></div>
<svg style="left:1385.5px;top:118.0px" width="8" height="6.0"><polyline points="1,1.5 4.0,4.5 7,1.5" fill="none" stroke="#3a3a3a" stroke-width="1.2"/></svg>
<div class="t" style="left:1096.50px;top:146.57px;font-size:11.5px;color:#444;transform:scaleX(0.884);transform-origin:0 0;">Styles</div>
<div style="left:1407px;top:69px;width:1px;height:87px;background:#c8c6c4"></div>
<svg style="left:1421px;top:74px;" width="32" height="24" viewBox="0 0 32 24"><rect x="2.5" y="1.5" width="28" height="21" fill="#fff" stroke="#262626" stroke-width="1.1"/><rect x="10" y="8.5" width="20" height="7" fill="#6aaae3"/><g stroke="#262626" stroke-width="1"><line x1="11.5" y1="1" x2="11.5" y2="23"/><line x1="20.5" y1="1" x2="20.5" y2="23"/><line x1="2" y1="8.5" x2="31" y2="8.5"/><line x1="2" y1="15.5" x2="31" y2="15.5"/></g><g stroke="#4a8fd0" stroke-width="1.3" fill="none"><polyline points="7,6.5 1.5,12 7,17.5"/><line x1="1.5" y1="12" x2="14" y2="12"/></g></svg>
<div class="t" style="left:1422.60px;top:107.37px;font-size:11.5px;color:#323130;transform:scaleX(0.977);transform-origin:0 0;">Insert</div>
<svg style="left:1432.3px;top:125.0px" width="8" height="6.0"><polyline points="1,1.5 4.0,4.5 7,1.5" fill="none" stroke="#3a3a3a" stroke-width="1.2"/></svg>
<svg style="left:1463px;top:74px;" width="34" height="24" viewBox="0 0 34 24"><rect x="2.5" y="1.5" width="27" height="21" fill="#fff" stroke="#262626" stroke-width="1.1"/><rect x="6" y="8.5" width="16" height="7" fill="#6aaae3"/><g stroke="#262626" stroke-width="1"><line x1="11.5" y1="1" x2="11.5" y2="23"/><line x1="20.5" y1="1" x2="20.5" y2="23"/><line x1="2" y1="8.5" x2="30" y2="8.5"/><line x1="2" y1="15.5" x2="30" y2="15.5"/></g><g stroke="#e0585c" stroke-width="1.3"><line x1="21" y1="6" x2="32" y2="17"/><line x1="32" y1="6" x2="21" y2="17"/></g></svg>
<div class="t" style="left:1462.40px;top:107.37px;font-size:11.5px;color:#323130;transform:scaleX(0.981);transform-origin:0 0;">Delete</div>
<svg style="left:1474.8px;top:125.0px" width="8" height="6.0"><polyline points="1,1.5 4.0,4.5 7,1.5" fill="none" stroke="#3a3a3a" stroke-width="1.2"/></svg>
<svg style="left:1506px;top:69px;" width="30" height="29" viewBox="0 0 30 29"><line x1="6" y1="2.5" x2="22" y2="2.5" stroke="#3b8fd1" stroke-width="1.1"/><line x1="5.5" y1="0.5" x2="5.5" y2="4.5" stroke="#3b8fd1"/><line x1="22.5" y1="0.5" x2="22.5" y2="4.5" stroke="#3b8fd1"/><rect x="1.5" y="6.5" width="27" height="21" fill="#fff" stroke="#262626" stroke-width="1.1"/><rect x="8" y="13.5" width="13.5" height="7" fill="#6aaae3"/><g stroke="#262626" stroke-width="1"><line x1="8.5" y1="6" x2="8.5" y2="28"/><line x1="21.5" y1="6" x2="21.5" y2="28"/><line x1="1" y1="13.5" x2="29" y2="13.5"/><line x1="1" y1="20.5" x2="29" y2="20.5"/></g></svg>
<div class="t" style="left:1502.30px;top:107.37px;font-size:11.5px;color:#323130;transform:scaleX(1.022);transform-origin:0 0;">Format</div>
<svg style="left:1516.5px;top:125.0px" width="8" height="6.0"><polyline points="1,1.5 4.0,4.5 7,1.5" fill="none" stroke="#3a3a3a" stroke-width="1.2"/></svg>
<div class="t" style="left:1467.70px;top:147.07px;font-size:11.5px;color:#444;transform:scaleX(0.891);transform-origin:0 0;">Cells</div>
<div style="left:1550px;top:69px;width:1px;height:87px;background:#c8c6c4"></div>
<svg style="left:1562px;top:70px;" width="16" height="16" viewBox="0 0 16 16"><polyline points="14,3.5 14,1.5 1.5,1.5 8,8 1.5,14.5 14,14.5 14,12.5" fill="none" stroke="#262626" stroke-width="1.2"/></svg>
<div class="t" style="left:1581.20px;top:74.07px;font-size:11.5px;color:#323130;transform:scaleX(1.035);transform-origin:0 0;">AutoSum</div>
<svg style="left:1640.6px;top:75.4px" width="8" height="6.0"><polyline points="1,1.5 4.0,4.5 7,1.5" fill="none" stroke="#3a3a3a" stroke-width="1.2"/></svg>
<svg style="left:1561px;top:93px;" width="18" height="16" viewBox="0 0 18 16"><rect x="1.5" y="1.5" width="15" height="13" fill="#fff" stroke="#262626" stroke-width="1.1"/><line x1="1.5" y1="4" x2="16.5" y2="4" stroke="#262626"/><g stroke="#3b8fd1" stroke-width="1.2" fill="none"><line x1="9" y1="6" x2="9" y2="12.5"/><polyline points="6,9.5 9,12.5 12,9.5"/></g></svg>
<div class="t" style="left:1581.50px;top:96.87px;font-size:11.5px;color:#323130;transform:scaleX(0.962);transform-origin:0 0;">Fill</div>
<svg style="left:1599.3px;top:98.25px" width="7" height="5.5"><polyline points="1,1.5 3.5,4.0 6,1.5" fill="none" stroke="#3a3a3a" stroke-width="1.2"/></svg>
<svg style="left:1561px;top:116px;" width="17" height="16" viewBox="0 0 17 16"><path d="M1 10l8-8 6.5 6.5-8 8z" fill="#fff" stroke="#b146c2" stroke-width="1.2"/><path d="M1 10l3.5-3.5 6.5 6.5-3.5 3.5z" fill="#d98fe3" stroke="#b146c2" stroke-width="1.2"/></svg>
<div class="t" style="left:1581.50px;top:119.77px;font-size:11.5px;color:#323130;transform:scaleX(0.964);transform-origin:0 0;">Clear</div>
<svg style="left:1611.0px;top:121.25px" width="7" height="5.5"><polyline points="1,1.5 3.5,4.0 6,1.5" fill="none" stroke="#3a3a3a" stroke-width="1.2"/></svg>
<svg style="left:1659px;top:72px;" width="32" height="28" viewBox="0 0 32 28"><text x="1" y="12.5" font-family="Liberation Sans" font-size="14" fill="#3b8fd1">A</text><text x="1.5" y="26.5" font-family="Liberation Sans" font-size="14" fill="#262626">Z</text><path d="M14.5 7.5h15l-5.5 7v8h-4v-8z" fill="#fff" stroke="#262626" stroke-width="1.1"/></svg>
<div class="t" style="left:1658.00px;top:107.57px;font-size:11.5px;color:#323130;transform:scaleX(1.054);transform-origin:0 0;">Sort &amp;</div>
<div class="t" style="left:1656.50px;top:123.87px;font-size:11.5px;color:#323130;transform:scaleX(0.983);transform-origin:0 0;">Filter</div>
<svg style="left:1685.3px;top:125.25px" width="7" height="5.5"><polyline points="1,1.5 3.5,4.0 6,1.5" fill="none" stroke="#3a3a3a" stroke-width="1.2"/></svg>
<svg style="left:1703px;top:70px;" width="32" height="32" viewBox="0 0 32 32"><circle cx="19.5" cy="12" r="10.3" fill="#fff" stroke="#262626" stroke-width="1.2"/><line x1="12" y1="19.5" x2="1.5" y2="30" stroke="#262626" stroke-width="1.2"/></svg>
<div class="t" style="left:1701.50px;top:107.57px;font-size:11.5px;color:#323130;transform:scaleX(1.065);transform-origin:0 0;">Find &amp;</div>
<div class="t" style="left:1698.20px;top:123.87px;font-size:11.5px;color:#323130;transform:scaleX(0.963);transform-origin:0 0;">Select</div>
<svg style="left:1732.0px;top:125.25px" width="7" height="5.5"><polyline points="1,1.5 3.5,4.0 6,1.5" fill="none" stroke="#3a3a3a" stroke-width="1.2"/></svg>
<div class="t" style="left:1632.80px;top:147.07px;font-size:11.5px;color:#444;transform:scaleX(1.020);transform-origin:0 0;">Editing</div>
<div style="left:1750px;top:69px;width:1px;height:87px;background:#c8c6c4"></div>
<svg style="left:1768px;top:71px;" width="24" height="30" viewBox="0 0 24 30"><path d="M9 1.5h13l-5.5 9h5.5l-14 18 3.5-11.5h-9.5z" fill="#62a8ea" stroke="#2f6fb5" stroke-width="1.2"/></svg>
<div class="t" style="left:1766.40px;top:107.57px;font-size:11.5px;color:#323130;transform:scaleX(0.928);transform-origin:0 0;">Ideas</div>
<div class="t" style="left:1766.40px;top:146.37px;font-size:11.5px;color:#444;transform:scaleX(0.928);transform-origin:0 0;">Ideas</div>
<div style="left:1808px;top:69px;width:1px;height:87px;background:#c8c6c4"></div>
<svg style="left:1900px;top:150px;" width="12" height="8" viewBox="0 0 12 8"><polyline points="1,6.5 6,1.5 11,6.5" fill="none" stroke="#444" stroke-width="1.2"/></svg>
<div style="left:6px;top:171px;width:101px;height:26px;background:#fff;border:1px solid #c8c8c8;box-sizing:border-box"></div>
<div class="t" style="left:12.40px;top:178.72px;font-size:12.5px;color:#262626;transform:scaleX(1.038);transform-origin:0 0;">N2</div>
<svg style="left:92px;top:181px;" width="9" height="5" viewBox="0 0 9 5"><polygon points="0,0 9,0 4.5,5" fill="#6a6a6a"/></svg>
<div style="left:121px;top:180px;width:2px;height:2px;background:#a0a0a0"></div>
<div style="left:121px;top:184px;width:2px;height:2px;background:#a0a0a0"></div>
<div style="left:121px;top:188px;width:2px;height:2px;background:#a0a0a0"></div>
<div style="left:137px;top:171px;width:110px;height:26px;background:#fff;border:1px solid #c8c8c8;box-sizing:border-box"></div>
<svg style="left:150px;top:179px;" width="12" height="11" viewBox="0 0 12 11"><g stroke="#bdbdbd" stroke-width="1.3"><line x1="1" y1="0.5" x2="11" y2="10.5"/><line x1="11" y1="0.5" x2="1" y2="10.5"/></g></svg>
<svg style="left:185px;top:178px;" width="15" height="12" viewBox="0 0 15 12"><polyline points="1.5,6.5 5,10 13.5,1.5" fill="none" stroke="#c4c4c4" stroke-width="2.3"/></svg>
<div class="t" style="left:222px;top:177px;font-size:14px;font-style:italic;font-weight:700;font-family:'Liberation Serif';color:#505050">f<span style="font-size:10px;margin-left:-1px">x</span></div>
<div style="left:250px;top:171px;width:1665px;height:26px;background:#fff;border:1px solid #c8c8c8;box-sizing:border-box"></div>
<div class="t" style="left:262.40px;top:179.62px;font-size:12.5px;color:#262626;transform:scaleX(1.085);transform-origin:0 0;">Process capability</div>
<svg style="left:1902px;top:180px;" width="10" height="7" viewBox="0 0 10 7"><polyline points="1.2,1.2 5,5 8.8,1.2" fill="none" stroke="#666" stroke-width="2"/></svg>
<div style="left:0;top:990px;width:1915px;height:28px;background:#e6e6e6;border-top:1px solid #c6c6c6;box-sizing:border-box"></div>
<svg style="left:25px;top:999px;" width="8" height="10" viewBox="0 0 8 10"><polygon points="6,1 1,5 6,9" fill="#bdbdbd"/></svg>
<svg style="left:54px;top:999px;" width="8" height="10" viewBox="0 0 8 10"><polygon points="2,1 7,5 2,9" fill="#bdbdbd"/></svg>
<div style="left:100px;top:994px;width:1px;height:20px;background:#d08080"></div>
<div style="left:103px;top:993px;width:96px;height:22px;background:#c00000"></div>
<div class="t" style="left:115.00px;top:998.22px;font-size:12.5px;color:#fff;transform:scaleX(1.064);transform-origin:0 0;">Introduction</div>
<div style="left:201px;top:990px;width:136px;height:25px;background:linear-gradient(#fff 0,#f4fbf6 35%,#c4ebd3 100%);border:1px solid #c6c6c6;border-top:none;box-sizing:border-box"></div>
<div style="left:201px;top:1013px;width:136px;height:2px;background:#2b6a48"></div>
<div class="t" style="left:213.60px;top:998.22px;font-size:12.5px;color:#217346;font-weight:700;transform:scaleX(0.992);transform-origin:0 0;">Process Capability</div>
<svg style="left:369px;top:995px;" width="18" height="18" viewBox="0 0 18 18"><circle cx="9" cy="9" r="7.5" fill="none" stroke="#6a6a6a" stroke-width="1.3"/><g stroke="#6a6a6a" stroke-width="1.5"><line x1="9" y1="5" x2="9" y2="13"/><line x1="5" y1="9" x2="13" y2="9"/></g></svg>
<div style="left:1152px;top:1000px;width:2px;height:2px;background:#a0a0a0"></div>
<div style="left:1152px;top:1004px;width:2px;height:2px;background:#a0a0a0"></div>
<div style="left:1152px;top:1008px;width:2px;height:2px;background:#a0a0a0"></div>
<div style="left:1169px;top:997px;width:730px;height:15px;background:#fff;border:1px solid #c6c6c6;box-sizing:border-box"></div>
<div style="left:1184px;top:997px;width:1px;height:15px;background:#c6c6c6"></div>
<div style="left:1883px;top:997px;width:1px;height:15px;background:#c6c6c6"></div>
<svg style="left:1173px;top:1000px;" width="8" height="9" viewBox="0 0 8 9"><polygon points="6,0.5 1.5,4.5 6,8.5" fill="#555"/></svg>
<svg style="left:1888px;top:1000px;" width="8" height="9" viewBox="0 0 8 9"><polygon points="2,0.5 6.5,4.5 2,8.5" fill="#555"/></svg>
<div style="left:1897px;top:222px;width:1px;height:768px;background:#ababab"></div>
<div style="left:1902px;top:209px;width:13px;height:781px;background:#fff;border:1px solid #c6c6c6;border-right:none;box-sizing:border-box"></div>
<div style="left:1902px;top:224px;width:13px;height:1px;background:#c6c6c6"></div>
<div style="left:1903px;top:901px;width:12px;height:75px;background:#dadada"></div>
<div style="left:1902px;top:975px;width:13px;height:1px;background:#c6c6c6"></div>
<svg style="left:1905px;top:214px;" width="9" height="6" viewBox="0 0 9 6"><polygon points="0.5,5.5 4.5,1 8.5,5.5" fill="#555"/></svg>
<svg style="left:1905px;top:980px;" width="9" height="6" viewBox="0 0 9 6"><polygon points="0.5,0.5 4.5,5 8.5,0.5" fill="#555"/></svg>
<div style="left:0;top:1018px;width:1915px;height:21px;background:#f3f2f1;border-top:1px solid #dcdcdc;box-sizing:border-box"></div>
<div style="left:1620px;top:1019px;width:40px;height:20px;background:#c8c6c4"></div>
<svg style="left:1632px;top:1022px;" width="15" height="14" viewBox="0 0 15 14"><g stroke="#262626" stroke-width="1.2" fill="none"><rect x="1.5" y="0.5" width="12" height="12"/><line x1="5.5" y1="0" x2="5.5" y2="13"/><line x1="9.5" y1="0" x2="9.5" y2="13"/><line x1="1" y1="4.5" x2="14" y2="4.5"/><line x1="1" y1="8.5" x2="14" y2="8.5"/></g></svg>
<svg style="left:1672px;top:1022px;" width="16" height="14" viewBox="0 0 16 14"><g stroke="#444" stroke-width="1" fill="none"><rect x="1.5" y="0.5" width="13" height="13"/><rect x="4.5" y="2.5" width="7" height="9"/><line x1="6" y1="5" x2="10" y2="5"/><line x1="6" y1="7" x2="10" y2="7"/><line x1="6" y1="9" x2="10" y2="9"/></g></svg>
<svg style="left:1712px;top:1022px;" width="16" height="14" viewBox="0 0 16 14"><g stroke="#444" stroke-width="1" fill="none"><rect x="1.5" y="0.5" width="13" height="13"/><polyline points="1.5,7.5 8.5,7.5 8.5,0.5"/><line x1="5" y1="0.5" x2="5" y2="7.5"/></g></svg>
<div style="left:1746px;top:1028px;width:8px;height:1px;background:#444"></div>
<div style="left:1759px;top:1028px;width:99px;height:1px;background:#b4b4b4"></div>
<div style="left:1807px;top:1024px;width:5px;height:11px;background:#6a6a6a"></div>
<div style="left:1863px;top:1028px;width:9px;height:1px;background:#444"></div>
<div style="left:1867px;top:1024px;width:1px;height:9px;background:#444"></div>
<div class="t" style="left:1885.10px;top:1024.49px;font-size:11px;color:#444;transform:scaleX(0.955);transform-origin:0 0;">100%</div>
</body></html>
